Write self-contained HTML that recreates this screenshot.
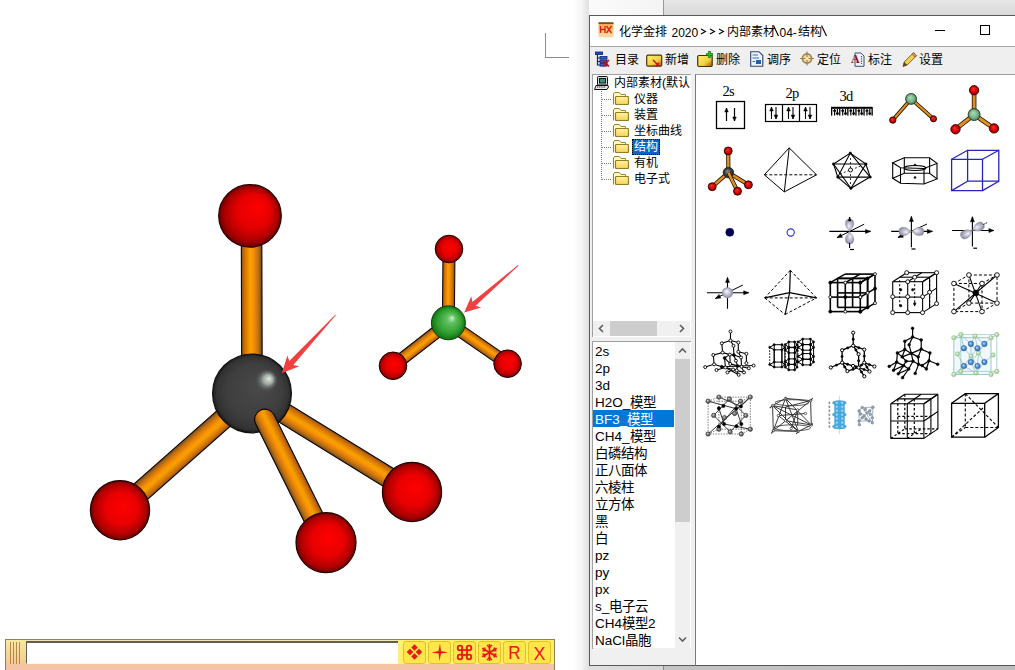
<!DOCTYPE html>
<html lang="zh-CN">
<head>
<meta charset="utf-8">
<style>
*{margin:0;padding:0;box-sizing:border-box}
html,body{width:1015px;height:670px;overflow:hidden;background:#fff;font-family:"Liberation Sans",sans-serif;}
.a{position:absolute}
#desk{left:663px;top:0;width:352px;height:15px;background:linear-gradient(#e6e6e6,#d9d9d9);border-left:1px solid #9a9a9a}
#deskl{left:589px;top:0;width:74px;height:15px;background:linear-gradient(90deg,#fbfbfb,#f4f4f4)}
#shadow{left:572px;top:0px;width:17px;height:670px;background:linear-gradient(90deg,rgba(0,0,0,0),rgba(0,0,0,0.03) 50%,rgba(0,0,0,0.12))}
#win{left:589px;top:15px;width:430px;height:651px;background:#f0f0f0;border:1px solid #5a5a5a;border-right:none}
#title{left:590px;top:16px;width:425px;height:30px;background:#fff}
#tline{left:590px;top:46px;width:425px;height:1px;background:#a8a8a8}
#tb{left:590px;top:47px;width:425px;height:27px;background:#efefef}
#tree{left:592px;top:74px;width:99px;height:263px;background:#fff;border-top:1px solid #a0a0a0;border-left:1px solid #a0a0a0}
#list{left:592px;top:341px;width:99px;height:308px;background:#fff;border-top:1px solid #a0a0a0;border-left:1px solid #a0a0a0}
#grid{left:695px;top:74px;width:320px;height:592px;background:#fff;border-top:1px solid #a0a0a0;border-left:1px solid #7a7a7a;border-bottom:1px solid #555}
#below{left:589px;top:666px;width:426px;height:4px;background:linear-gradient(90deg,#e0e0e0 0,#d4d4d4 74px,#8a8a8a 74px,#8a8a8a 75px,#c4c4c4 75px,#bcbcbc)}
</style>
</head>
<body>
<!--MOL--><svg class="a" style="left:0;top:0" width="580" height="630" viewBox="0 0 580 630">
<defs>
<linearGradient id="bg" x1="0" y1="0" x2="0" y2="1">
<stop offset="0" stop-color="#7a5a20"/><stop offset="0.15" stop-color="#d46c00"/><stop offset="0.4" stop-color="#f0a000"/><stop offset="0.5" stop-color="#ff9a00"/><stop offset="0.62" stop-color="#f08a08"/><stop offset="0.82" stop-color="#c07010"/><stop offset="1" stop-color="#6a4a20"/>
</linearGradient>
<radialGradient id="red" cx="0.5" cy="0.5" r="0.5" fx="0.56" fy="0.42">
<stop offset="0" stop-color="#ff0000"/><stop offset="0.55" stop-color="#e80000"/><stop offset="0.85" stop-color="#b00000"/><stop offset="1" stop-color="#700000"/>
</radialGradient>
<radialGradient id="redt" cx="0.5" cy="0.5" r="0.5" fx="0.64" fy="0.34">
<stop offset="0" stop-color="#ff0000"/><stop offset="0.55" stop-color="#e40000"/><stop offset="0.85" stop-color="#aa0000"/><stop offset="1" stop-color="#680000"/>
</radialGradient>
<radialGradient id="blk" cx="0.5" cy="0.5" r="0.5" fx="0.6" fy="0.4">
<stop offset="0" stop-color="#4a4a4a"/><stop offset="0.7" stop-color="#3e3e3e"/><stop offset="0.92" stop-color="#323232"/><stop offset="1" stop-color="#1c1c1c"/>
</radialGradient>
<radialGradient id="hl" cx="0.5" cy="0.5" r="0.5" fx="0.62" fy="0.42">
<stop offset="0" stop-color="#e0ece4" stop-opacity="1"/><stop offset="0.4" stop-color="#b8c4bc" stop-opacity="0.8"/><stop offset="1" stop-color="#404040" stop-opacity="0"/>
</radialGradient>
<radialGradient id="grn" cx="0.5" cy="0.5" r="0.5" fx="0.62" fy="0.35">
<stop offset="0" stop-color="#c8f0c8"/><stop offset="0.25" stop-color="#60c060"/><stop offset="0.7" stop-color="#30a030"/><stop offset="1" stop-color="#107010"/>
</radialGradient>
</defs>
<g transform="translate(252.00,393.40) rotate(-90.16)"><rect x="0" y="-10.25" width="177.4" height="20.50" fill="url(#bg)" stroke="#100000" stroke-width="1.1"/></g>
<g transform="translate(252.00,393.40) rotate(138.54)"><rect x="0" y="-10.25" width="176.1" height="20.50" fill="url(#bg)" stroke="#100000" stroke-width="1.1"/></g>
<g transform="translate(252.00,393.40) rotate(31.64)"><rect x="0" y="-10.25" width="187.9" height="20.50" fill="url(#bg)" stroke="#100000" stroke-width="1.1"/></g>
<circle cx="250" cy="215.8" r="31.3" fill="url(#redt)" stroke="#200000" stroke-width="1.2"/>
<circle cx="120" cy="510.2" r="29.6" fill="url(#red)" stroke="#200000" stroke-width="1.2"/>
<circle cx="412" cy="492" r="29.6" fill="url(#red)" stroke="#200000" stroke-width="1.2"/>
<circle cx="252" cy="393.4" r="39.4" fill="url(#blk)" stroke="#101010" stroke-width="1.2"/>
<circle cx="266.5" cy="380.5" r="12" fill="url(#hl)"/>
<g transform="translate(264.89,419.38) rotate(63.62)"><path d="M137.5,-10.25 L0,-10.25 A10.25,10.25 0 0 0 0,10.25 L137.5,10.25 Z" fill="url(#bg)" stroke="#100000" stroke-width="1.1"/></g>
<circle cx="326" cy="542.6" r="30" fill="url(#red)" stroke="#200000" stroke-width="1.2"/>
<g transform="translate(448.40,322.80) rotate(-89.53)"><rect x="0" y="-6.00" width="73.8" height="12.00" fill="url(#bg)" stroke="#100000" stroke-width="1"/></g>
<g transform="translate(448.40,322.80) rotate(142.18)"><rect x="0" y="-6.00" width="70.1" height="12.00" fill="url(#bg)" stroke="#100000" stroke-width="1"/></g>
<g transform="translate(448.40,322.80) rotate(34.64)"><rect x="0" y="-6.00" width="72.0" height="12.00" fill="url(#bg)" stroke="#100000" stroke-width="1"/></g>
<circle cx="449" cy="249" r="13.8" fill="url(#red)" stroke="#200000" stroke-width="1"/>
<circle cx="393" cy="365.8" r="13.8" fill="url(#red)" stroke="#200000" stroke-width="1"/>
<circle cx="507.6" cy="363.7" r="13.8" fill="url(#red)" stroke="#200000" stroke-width="1"/>
<circle cx="448.4" cy="322.8" r="17" fill="url(#grn)" stroke="#104010" stroke-width="1"/>
<polygon points="335.2,314.7 289.3,361.1 287.4,355.4 281.8,373.3 299.2,366.2 293.3,364.9 335.8,315.3" fill="#f04040"/>
<polygon points="517.9,265.1 472.4,302.1 471.3,296.3 464.2,312.5 481.2,307.6 475.6,305.8 518.5,265.7" fill="#f04040"/>
</svg><!--/MOL-->
<div class="a" id="deskl"></div>
<div class="a" id="desk"></div>
<div class="a" id="shadow"></div>
<div class="a" id="win"></div>
<div class="a" id="title"></div>
<div class="a" id="tline"></div>
<div class="a" id="tb"></div>
<div class="a" id="tree"></div>
<div class="a" id="list"></div>
<div class="a" id="grid"></div>
<div class="a" id="below"></div>

<!-- title bar -->
<svg class="a" style="left:598px;top:22px" width="16" height="16" viewBox="0 0 16 16">
<defs><linearGradient id="hxg" x1="0" y1="0" x2="0" y2="1"><stop offset="0" stop-color="#f0a850"/><stop offset="0.5" stop-color="#f8c878"/><stop offset="1" stop-color="#f0e0b0"/></linearGradient></defs>
<rect x="0.5" y="0.5" width="15" height="15" rx="1" fill="url(#hxg)"/>
<rect x="0.5" y="0.3" width="15" height="1.6" fill="#6a4a20"/>
<path d="M2.5,4 L2.5,11 M7,4 L7,11 M2.5,7.5 L7,7.5 M8.5,4 L13.5,11 M13.5,4 L8.5,11" stroke="#e02010" stroke-width="1.4" fill="none"/>
</svg>
<div class="a" id="ttl" style="left:0;top:25px;font-size:12px;line-height:14px;color:#000;white-space:nowrap">
<span class="a" style="left:619px">化学金排</span><span class="a" style="left:671.5px;top:1px">2020</span>
<span class="a" style="left:726.5px">内部素材</span><span class="a" style="left:779.5px;top:1px">04-</span><span class="a" style="left:797.5px">结构</span>
</div>
<svg class="a" style="left:770px;top:24px" width="60" height="14"><g stroke="#000" stroke-width="1.1"><line x1="3.5" y1="1.5" x2="8.5" y2="12"/><line x1="51.5" y1="1.5" x2="56.5" y2="12"/></g></svg>
<svg class="a" style="left:700px;top:28px" width="26" height="7"><g fill="none" stroke="#000" stroke-width="1.1"><path d="M1,1 L5.5,3.5 L1,6"/><path d="M10,1 L14.5,3.5 L10,6"/><path d="M19,1 L23.5,3.5 L19,6"/></g></svg>
<div class="a" style="left:935px;top:30px;width:10px;height:1px;background:#000"></div>
<div class="a" style="left:980px;top:25px;width:10px;height:10px;border:1px solid #000"></div>
<!-- toolbar -->
<svg class="a" style="left:595px;top:51px" width="17" height="17" viewBox="0 0 17 17">
<rect x="0.5" y="1" width="7" height="2.6" fill="#2050c0" stroke="#102070" stroke-width="0.8"/>
<path d="M2.5,3.5 L2.5,14.5 M2.5,7 L5,7 M2.5,10.5 L5,10.5 M2.5,14 L5,14" stroke="#102070" stroke-width="1.2" fill="none"/>
<rect x="5" y="5.5" width="7" height="2.6" fill="#3060d0" stroke="#102070" stroke-width="0.8"/>
<rect x="5" y="9" width="7" height="2.6" fill="#3060d0" stroke="#102070" stroke-width="0.8"/>
<rect x="5" y="12.5" width="7" height="2.6" fill="#3060d0" stroke="#102070" stroke-width="0.8"/>
<path d="M8,9 L14,15.5 M14,9 L8,15.5" stroke="#c01010" stroke-width="1.6"/>
</svg>
<svg class="a" style="left:646px;top:54px" width="17" height="14" viewBox="0 0 17 14">
<defs><linearGradient id="yb" x1="0" y1="0" x2="1" y2="1"><stop offset="0" stop-color="#fff070"/><stop offset="0.6" stop-color="#f0d040"/><stop offset="1" stop-color="#a05010"/></linearGradient></defs>
<rect x="0.7" y="1.2" width="15" height="11" rx="1.2" fill="url(#yb)" stroke="#503010" stroke-width="1.2"/>
<path d="M7,6 L13,12 M10,12 L13,9" stroke="#c01010" stroke-width="1.4" fill="none"/>
</svg>
<svg class="a" style="left:697px;top:50px" width="17" height="18" viewBox="0 0 17 18">
<rect x="0.7" y="5.5" width="14.5" height="11" rx="1.2" fill="url(#yb)" stroke="#403010" stroke-width="1.2"/>
<path d="M12.5,1 L12.5,8 M9,4.5 L16,4.5" stroke="#108010" stroke-width="2.6"/>
<path d="M12.5,1.8 L12.5,7.2 M9.8,4.5 L15.2,4.5" stroke="#30c030" stroke-width="1.2"/>
</svg>
<svg class="a" style="left:750px;top:51px" width="14" height="16" viewBox="0 0 14 16">
<path d="M0.7,0.7 L9,0.7 L12.8,4.5 L12.8,15.3 L0.7,15.3 Z" fill="#eef4ff" stroke="#304070" stroke-width="1.1"/>
<path d="M2.5,4 L8,4 M2.5,7 L9,7 M2.5,10.5 L5,10.5" stroke="#3070c0" stroke-width="1.1"/>
<rect x="6" y="9" width="5" height="4" fill="#2060b0"/>
</svg>
<svg class="a" style="left:800px;top:51px" width="15" height="15" viewBox="0 0 15 15">
<circle cx="7" cy="7.5" r="4.6" fill="#f0dca0" stroke="#a08050" stroke-width="1.6"/>
<path d="M7,0.5 L7,14.5 M0,7.5 L14,7.5" stroke="#a08050" stroke-width="1.2"/>
<circle cx="7" cy="7.5" r="1.5" fill="#fff0c0"/>
</svg>
<svg class="a" style="left:851px;top:52px" width="14" height="15" viewBox="0 0 14 15">
<path d="M4,1 L10,1 L13,4 L13,14.3 L4,14.3 Z" fill="#eef2fa" stroke="#405070" stroke-width="1"/>
<path d="M10.5,4 L10.5,12" stroke="#3060a0" stroke-width="1.2" stroke-dasharray="1.3,1"/>
<text x="0" y="11" font-family="Liberation Serif" font-size="12" font-weight="bold" fill="#901020">A</text>
</svg>
<svg class="a" style="left:901px;top:51px" width="17" height="17" viewBox="0 0 17 17">
<path d="M2,15.5 L3.2,11 L12.5,1.7 L15.5,4.7 L6.2,14 Z" fill="#f4d050" stroke="#806020" stroke-width="1"/>
<path d="M12.5,1.7 L15.5,4.7 L14,6.2 L11,3.2 Z" fill="#e89090" stroke="#806020" stroke-width="0.8"/>
<path d="M2,15.5 L3.2,11 L6.2,14 Z" fill="#604020"/>
</svg>

<div class="a" id="tbtext" style="left:0;top:52px;font-size:12px;line-height:16px;color:#000;white-space:nowrap">
<span class="a" style="left:615px">目录</span>
<span class="a" style="left:665px">新增</span>
<span class="a" style="left:716px">删除</span>
<span class="a" style="left:767px">调序</span>
<span class="a" style="left:817px">定位</span>
<span class="a" style="left:868px">标注</span>
<span class="a" style="left:919px">设置</span>
</div>

<svg class="a" style="left:0;top:0" width="1" height="1"><defs>
<linearGradient id="fold" x1="0" y1="0" x2="0" y2="1"><stop offset="0" stop-color="#fff4a0"/><stop offset="0.6" stop-color="#f8e070"/><stop offset="1" stop-color="#f0d060"/></linearGradient>
<symbol id="folder" viewBox="0 0 16 13">
<path d="M0.5,12.5 L0.5,2 L1.5,0.5 L6.5,0.5 L8,2.5 L12.5,2.5 L12.5,4.5" fill="#fff8c0" stroke="#a08830" stroke-width="1"/>
<rect x="2.5" y="4.5" width="13" height="8" rx="1" fill="url(#fold)" stroke="#9a7a20" stroke-width="1.2"/>
</symbol>
</defs></svg>
<svg class="a" style="left:594px;top:76px" width="16" height="14" viewBox="0 0 16 14">
<rect x="3.5" y="0.5" width="10" height="8.5" rx="1" fill="#d8d8d8" stroke="#111" stroke-width="1"/>
<rect x="5.5" y="2.5" width="6" height="4.5" fill="#409080" stroke="#111" stroke-width="1"/>
<path d="M2,9.5 L14,9.5 L14.5,11 L13,13.5 L0.5,13.5 Z" fill="#e8e8e8" stroke="#111" stroke-width="1"/>
<path d="M3,11 L12,11" stroke="#111" stroke-width="1.2" stroke-dasharray="1.2,1"/>
</svg>
<div class="a" style="left:614px;top:75px;width:76px;height:16px;overflow:hidden;font-size:12px;line-height:16px;white-space:nowrap;color:#000">内部素材(默认</div>
<svg class="a" style="left:592px;top:74px" width="30" height="120"><path d="M9.5,17 L9.5,106" stroke="#808080" stroke-width="1" stroke-dasharray="1,1"/><path d="M10,25.5 L20,25.5" stroke="#808080" stroke-width="1" stroke-dasharray="1,1"/><path d="M10,41.5 L20,41.5" stroke="#808080" stroke-width="1" stroke-dasharray="1,1"/><path d="M10,57.5 L20,57.5" stroke="#808080" stroke-width="1" stroke-dasharray="1,1"/><path d="M10,73.5 L20,73.5" stroke="#808080" stroke-width="1" stroke-dasharray="1,1"/><path d="M10,89.5 L20,89.5" stroke="#808080" stroke-width="1" stroke-dasharray="1,1"/><path d="M10,105.5 L20,105.5" stroke="#808080" stroke-width="1" stroke-dasharray="1,1"/></svg>
<svg class="a" style="left:613px;top:92px" width="16" height="13"><use href="#folder"/></svg>
<div class="a" style="left:634px;top:91px;font-size:12px;line-height:16px;white-space:nowrap;color:#000">仪器</div>
<svg class="a" style="left:613px;top:108px" width="16" height="13"><use href="#folder"/></svg>
<div class="a" style="left:634px;top:107px;font-size:12px;line-height:16px;white-space:nowrap;color:#000">装置</div>
<svg class="a" style="left:613px;top:124px" width="16" height="13"><use href="#folder"/></svg>
<div class="a" style="left:634px;top:123px;font-size:12px;line-height:16px;white-space:nowrap;color:#000">坐标曲线</div>
<svg class="a" style="left:613px;top:140px" width="16" height="13"><use href="#folder"/></svg>
<div class="a" style="left:632px;top:139px;width:28px;height:16px;background:#0a64c8;outline:1px dotted #000;outline-offset:-1px"></div>
<div class="a" style="left:634px;top:139px;font-size:12px;line-height:16px;white-space:nowrap;color:#fff">结构</div>
<svg class="a" style="left:613px;top:156px" width="16" height="13"><use href="#folder"/></svg>
<div class="a" style="left:634px;top:155px;font-size:12px;line-height:16px;white-space:nowrap;color:#000">有机</div>
<svg class="a" style="left:613px;top:172px" width="16" height="13"><use href="#folder"/></svg>
<div class="a" style="left:634px;top:171px;font-size:12px;line-height:16px;white-space:nowrap;color:#000">电子式</div>
<div class="a" style="left:593px;top:321px;width:97px;height:15px;background:#f0f0f0"></div>
<div class="a" style="left:610px;top:321px;width:47px;height:15px;background:#cdcdcd"></div>
<svg class="a" style="left:597px;top:324px" width="9" height="9"><path d="M6,1 L2.5,4.5 L6,8" fill="none" stroke="#606060" stroke-width="1.6"/></svg>
<svg class="a" style="left:677px;top:324px" width="9" height="9"><path d="M3,1 L6.5,4.5 L3,8" fill="none" stroke="#606060" stroke-width="1.6"/></svg>
<div class="a" style="left:593px;top:410px;width:81px;height:17px;background:#0078d7"></div>
<div class="a" style="left:595px;top:343px;font-size:13.5px;line-height:17px;white-space:nowrap;color:#000">2s</div>
<div class="a" style="left:595px;top:360px;font-size:13.5px;line-height:17px;white-space:nowrap;color:#000">2p</div>
<div class="a" style="left:595px;top:377px;font-size:13.5px;line-height:17px;white-space:nowrap;color:#000">3d</div>
<div class="a" style="left:595px;top:394px;font-size:13.5px;line-height:17px;white-space:nowrap;color:#000">H2O_模型</div>
<div class="a" style="left:595px;top:411px;font-size:13.5px;line-height:17px;white-space:nowrap;color:#fff">BF3_模型</div>
<div class="a" style="left:595px;top:428px;font-size:13.5px;line-height:17px;white-space:nowrap;color:#000">CH4_模型</div>
<div class="a" style="left:595px;top:445px;font-size:13.5px;line-height:17px;white-space:nowrap;color:#000">白磷结构</div>
<div class="a" style="left:595px;top:462px;font-size:13.5px;line-height:17px;white-space:nowrap;color:#000">正八面体</div>
<div class="a" style="left:595px;top:479px;font-size:13.5px;line-height:17px;white-space:nowrap;color:#000">六棱柱</div>
<div class="a" style="left:595px;top:496px;font-size:13.5px;line-height:17px;white-space:nowrap;color:#000">立方体</div>
<div class="a" style="left:595px;top:513px;font-size:13.5px;line-height:17px;white-space:nowrap;color:#000">黑</div>
<div class="a" style="left:595px;top:530px;font-size:13.5px;line-height:17px;white-space:nowrap;color:#000">白</div>
<div class="a" style="left:595px;top:547px;font-size:13.5px;line-height:17px;white-space:nowrap;color:#000">pz</div>
<div class="a" style="left:595px;top:564px;font-size:13.5px;line-height:17px;white-space:nowrap;color:#000">py</div>
<div class="a" style="left:595px;top:581px;font-size:13.5px;line-height:17px;white-space:nowrap;color:#000">px</div>
<div class="a" style="left:595px;top:598px;font-size:13.5px;line-height:17px;white-space:nowrap;color:#000">s_电子云</div>
<div class="a" style="left:595px;top:615px;font-size:13.5px;line-height:17px;white-space:nowrap;color:#000">CH4模型2</div>
<div class="a" style="left:595px;top:632px;font-size:13.5px;line-height:17px;white-space:nowrap;color:#000">NaCl晶胞</div>
<div class="a" style="left:593px;top:648px;width:98px;height:1px;background:#f0f0f0"></div>
<div class="a" style="left:675px;top:342px;width:15px;height:306px;background:#f0f0f0"></div>
<div class="a" style="left:675px;top:359px;width:15px;height:163px;background:#cdcdcd"></div>
<svg class="a" style="left:678px;top:346px" width="9" height="9"><path d="M1,6.5 L4.5,3 L8,6.5" fill="none" stroke="#606060" stroke-width="1.6"/></svg>
<svg class="a" style="left:678px;top:635px" width="9" height="9"><path d="M1,2.5 L4.5,6 L8,2.5" fill="none" stroke="#606060" stroke-width="1.6"/></svg>

<!-- L mark -->
<div class="a" style="left:545px;top:33px;width:24px;height:25px;border-left:1px solid #8c8c8c;border-bottom:1px solid #8c8c8c"></div>
<!-- bottom toolbar -->
<div class="a" style="left:5px;top:639px;width:550px;height:31px;border:1px solid #8c8060;border-bottom:none;background:linear-gradient(90deg,#f8e0a8,#fbe8b0 70%,#fff070 72%,#ffee60)"></div>
<div class="a" style="left:6px;top:640px;width:20px;height:26px;background:linear-gradient(#f8e8a0,#f2c890)"></div>
<svg class="a" style="left:6px;top:641px" width="20" height="26"><g stroke="#a88048" stroke-width="0.9"><line x1="4.5" y1="1" x2="4.5" y2="25"/><line x1="7.5" y1="1" x2="7.5" y2="25"/><line x1="10.5" y1="1" x2="10.5" y2="25"/><line x1="13.5" y1="1" x2="13.5" y2="25"/></g></svg>
<div class="a" style="left:26px;top:641px;width:372px;height:23px;background:#fff;border-top:2px solid #606050;border-left:1.5px solid #606050;border-bottom:1px solid #fff8e0"></div>
<div class="a" style="left:5px;top:664px;width:550px;height:6px;background:#f4c4a4;border-left:1px solid #8c8060;border-right:1px solid #8c8060"></div>
<div class="a" style="left:403px;top:641px;width:23px;height:23px;background:#ffe64a;border:1px solid #e8c020;border-radius:3px"></div>
<div class="a" style="left:428px;top:641px;width:23px;height:23px;background:#ffe64a;border:1px solid #e8c020;border-radius:3px"></div>
<div class="a" style="left:453px;top:641px;width:23px;height:23px;background:#ffe64a;border:1px solid #e8c020;border-radius:3px"></div>
<div class="a" style="left:478px;top:641px;width:23px;height:23px;background:#ffe64a;border:1px solid #e8c020;border-radius:3px"></div>
<div class="a" style="left:503px;top:641px;width:23px;height:23px;background:#ffe64a;border:1px solid #e8c020;border-radius:3px"></div>
<div class="a" style="left:528px;top:641px;width:23px;height:23px;background:#ffe64a;border:1px solid #e8c020;border-radius:3px"></div>
<svg class="a" style="left:403px;top:641px" width="23" height="23"><g fill="#e81818"><rect x="-2.3" y="-2.3" width="4.6" height="4.6" transform="translate(11.5,6.5) rotate(45)"/><rect x="-2.3" y="-2.3" width="4.6" height="4.6" transform="translate(7,11) rotate(45)"/><rect x="-2.3" y="-2.3" width="4.6" height="4.6" transform="translate(16,11) rotate(45)"/><rect x="-2.3" y="-2.3" width="4.6" height="4.6" transform="translate(11.5,15.5) rotate(45)"/></g></svg>
<svg class="a" style="left:428px;top:641px" width="23" height="23"><path d="M12,2.5 L13,10 L20,11.5 L13,12.5 L11.5,20 L10.5,12.5 L3.5,11.5 L10.5,10 Z" fill="#e81818"/></svg>
<svg class="a" style="left:453px;top:641px" width="23" height="23"><g fill="none" stroke="#e81818" stroke-width="1.8"><rect x="9" y="9" width="5" height="5"/><circle cx="7" cy="7" r="2.3"/><circle cx="16" cy="7" r="2.3"/><circle cx="7" cy="16" r="2.3"/><circle cx="16" cy="16" r="2.3"/></g></svg>
<svg class="a" style="left:478px;top:641px" width="23" height="23"><g stroke="#e81818" stroke-width="1.8" fill="none"><line x1="11.5" y1="3" x2="11.5" y2="20"/><line x1="4.2" y1="7.2" x2="18.8" y2="15.8"/><line x1="4.2" y1="15.8" x2="18.8" y2="7.2"/><path d="M9,4 L11.5,6.5 L14,4 M9,19 L11.5,16.5 L14,19 M4.5,10 L7.5,9.5 L6.5,6.5 M18.5,13 L15.5,13.5 L16.5,16.5 M4.5,13 L7.5,13.5 L6.5,16.5 M18.5,10 L15.5,9.5 L16.5,6.5" stroke-width="1.4"/></g></svg>
<svg class="a" style="left:503px;top:641px" width="23" height="23"><text x="11.5" y="18.5" text-anchor="middle" font-family="Liberation Sans" font-size="18" fill="#e81818" transform="translate(11.5,0) scale(0.95,1) translate(-11.5,0)">R</text></svg>
<svg class="a" style="left:528px;top:641px" width="23" height="23"><text x="11.5" y="18.5" text-anchor="middle" font-family="Liberation Sans" font-size="18" fill="#e81818">X</text></svg>
<!--GRID--><svg class="a" style="left:0;top:0" width="1015" height="670" viewBox="0 0 1015 670">
<defs>
<radialGradient id="sred" fx="0.4" fy="0.35"><stop offset="0" stop-color="#ff3030"/><stop offset="0.7" stop-color="#d00000"/><stop offset="1" stop-color="#800000"/></radialGradient>
<radialGradient id="sgrn" fx="0.4" fy="0.35"><stop offset="0" stop-color="#b0e0b8"/><stop offset="0.7" stop-color="#70b080"/><stop offset="1" stop-color="#407050"/></radialGradient>
<radialGradient id="sdk" fx="0.4" fy="0.35"><stop offset="0" stop-color="#909090"/><stop offset="0.6" stop-color="#404040"/><stop offset="1" stop-color="#202020"/></radialGradient>
<radialGradient id="sgry" fx="0.35" fy="0.35"><stop offset="0" stop-color="#e0e0e0"/><stop offset="0.5" stop-color="#808080"/><stop offset="1" stop-color="#404040"/></radialGradient>
<radialGradient id="sblu" fx="0.35" fy="0.35"><stop offset="0" stop-color="#c0e0ff"/><stop offset="0.6" stop-color="#5090d0"/><stop offset="1" stop-color="#3060a0"/></radialGradient>
<radialGradient id="slgr" fx="0.35" fy="0.35"><stop offset="0" stop-color="#f0fff0"/><stop offset="0.6" stop-color="#b0d8a0"/><stop offset="1" stop-color="#80b080"/></radialGradient>
<radialGradient id="lobe" fx="0.4" fy="0.4"><stop offset="0" stop-color="#f4f4fa"/><stop offset="0.6" stop-color="#b8b8c8"/><stop offset="1" stop-color="#8888a0"/></radialGradient>
<radialGradient id="sorb" fx="0.4" fy="0.35"><stop offset="0" stop-color="#ffffff"/><stop offset="0.5" stop-color="#c8c8d8"/><stop offset="1" stop-color="#8888a0"/></radialGradient>
</defs>
<text x="722.5" y="96.0" font-family="Liberation Serif" font-size="14.5" fill="#000" text-anchor="start" letter-spacing="-0.8">2s</text>
<rect x="716.5" y="101.5" width="28" height="27" fill="none" stroke="#000" stroke-width="1.3"/>
<line x1="726.5" y1="108.0" x2="726.5" y2="121.0" stroke="#000" stroke-width="1.2"/>
<polygon points="724.7,112.0 726.5,108.0 728.3,112.0" fill="#000" stroke="#000" stroke-width="0.5"/>
<line x1="734.5" y1="108.0" x2="734.5" y2="121.0" stroke="#000" stroke-width="1.2"/>
<polygon points="732.7,117.0 734.5,121.0 736.3,117.0" fill="#000" stroke="#000" stroke-width="0.5"/>
<text x="785.5" y="98.0" font-family="Liberation Serif" font-size="14.5" fill="#000" text-anchor="start" letter-spacing="-0.8">2p</text>
<rect x="765.5" y="104.5" width="51" height="17" fill="none" stroke="#000" stroke-width="1.2"/>
<line x1="782.5" y1="104.5" x2="782.5" y2="121.5" stroke="#000" stroke-width="1.2"/>
<line x1="799.5" y1="104.5" x2="799.5" y2="121.5" stroke="#000" stroke-width="1.2"/>
<line x1="771.5" y1="107.0" x2="771.5" y2="119.0" stroke="#000" stroke-width="1.1"/>
<polygon points="769.7,111.0 771.5,107.0 773.3,111.0" fill="#000" stroke="#000" stroke-width="0.5"/>
<line x1="776.0" y1="107.0" x2="776.0" y2="119.0" stroke="#000" stroke-width="1.1"/>
<polygon points="774.2,115.0 776.0,119.0 777.8,115.0" fill="#000" stroke="#000" stroke-width="0.5"/>
<line x1="788.5" y1="107.0" x2="788.5" y2="119.0" stroke="#000" stroke-width="1.1"/>
<polygon points="786.7,111.0 788.5,107.0 790.3,111.0" fill="#000" stroke="#000" stroke-width="0.5"/>
<line x1="793.0" y1="107.0" x2="793.0" y2="119.0" stroke="#000" stroke-width="1.1"/>
<polygon points="791.2,115.0 793.0,119.0 794.8,115.0" fill="#000" stroke="#000" stroke-width="0.5"/>
<line x1="805.5" y1="107.0" x2="805.5" y2="119.0" stroke="#000" stroke-width="1.1"/>
<polygon points="803.7,111.0 805.5,107.0 807.3,111.0" fill="#000" stroke="#000" stroke-width="0.5"/>
<line x1="810.0" y1="107.0" x2="810.0" y2="119.0" stroke="#000" stroke-width="1.1"/>
<polygon points="808.2,115.0 810.0,119.0 811.8,115.0" fill="#000" stroke="#000" stroke-width="0.5"/>
<text x="839.5" y="101.0" font-family="Liberation Serif" font-size="14.5" fill="#000" text-anchor="start" letter-spacing="-0.8">3d</text>
<rect x="831" y="106.8" width="41" height="2" fill="#000"/>
<rect x="831.0" y="107" width="1.3" height="8.6" fill="#000"/>
<rect x="839.1" y="107" width="1.3" height="8.6" fill="#000"/>
<rect x="847.2" y="107" width="1.3" height="8.6" fill="#000"/>
<rect x="855.3" y="107" width="1.3" height="8.6" fill="#000"/>
<rect x="863.4" y="107" width="1.3" height="8.6" fill="#000"/>
<rect x="871.5" y="107" width="1.3" height="8.6" fill="#000"/>
<rect x="834.0" y="109" width="1.2" height="6.5" fill="#000"/>
<rect x="833.2" y="110" width="2.8" height="1.6" fill="#000"/>
<rect x="836.8" y="109" width="1.2" height="6.2" fill="#000"/>
<rect x="836.0" y="112.6" width="2.8" height="1.8" fill="#000"/>
<rect x="842.1" y="109" width="1.2" height="6.5" fill="#000"/>
<rect x="841.3" y="110" width="2.8" height="1.6" fill="#000"/>
<rect x="844.9" y="109" width="1.2" height="6.2" fill="#000"/>
<rect x="844.1" y="112.6" width="2.8" height="1.8" fill="#000"/>
<rect x="850.2" y="109" width="1.2" height="6.5" fill="#000"/>
<rect x="849.4" y="110" width="2.8" height="1.6" fill="#000"/>
<rect x="853.0" y="109" width="1.2" height="6.2" fill="#000"/>
<rect x="852.2" y="112.6" width="2.8" height="1.8" fill="#000"/>
<rect x="858.3" y="109" width="1.2" height="6.5" fill="#000"/>
<rect x="857.5" y="110" width="2.8" height="1.6" fill="#000"/>
<rect x="861.1" y="109" width="1.2" height="6.2" fill="#000"/>
<rect x="860.3" y="112.6" width="2.8" height="1.8" fill="#000"/>
<rect x="866.4" y="109" width="1.2" height="6.5" fill="#000"/>
<rect x="865.6" y="110" width="2.8" height="1.6" fill="#000"/>
<rect x="869.2" y="109" width="1.2" height="6.2" fill="#000"/>
<rect x="868.4" y="112.6" width="2.8" height="1.8" fill="#000"/>
<line x1="911.1" y1="98.9" x2="892.8" y2="120.1" stroke="#201000" stroke-width="3.8000000000000003"/>
<line x1="911.1" y1="98.9" x2="892.8" y2="120.1" stroke="#e09020" stroke-width="2.2"/>
<line x1="911.1" y1="98.9" x2="933.5" y2="118.8" stroke="#201000" stroke-width="3.8000000000000003"/>
<line x1="911.1" y1="98.9" x2="933.5" y2="118.8" stroke="#e09020" stroke-width="2.2"/>
<circle cx="892.8" cy="120.1" r="3.2" fill="url(#sred)" stroke="#200000" stroke-width="0.8"/>
<circle cx="933.5" cy="118.8" r="3.1" fill="url(#sred)" stroke="#200000" stroke-width="0.8"/>
<circle cx="911.1" cy="98.9" r="5.5" fill="url(#sgrn)" stroke="#203020" stroke-width="0.8"/>
<line x1="974.1" y1="114.6" x2="974.1" y2="90.2" stroke="#201000" stroke-width="4.6"/>
<line x1="974.1" y1="114.6" x2="974.1" y2="90.2" stroke="#e09020" stroke-width="3"/>
<line x1="974.1" y1="114.6" x2="955.5" y2="129.3" stroke="#201000" stroke-width="4.6"/>
<line x1="974.1" y1="114.6" x2="955.5" y2="129.3" stroke="#e09020" stroke-width="3"/>
<line x1="974.1" y1="114.6" x2="994.0" y2="128.4" stroke="#201000" stroke-width="4.6"/>
<line x1="974.1" y1="114.6" x2="994.0" y2="128.4" stroke="#e09020" stroke-width="3"/>
<circle cx="974.1" cy="90.2" r="4.7" fill="url(#sred)" stroke="#200000" stroke-width="0.8"/>
<circle cx="955.5" cy="129.3" r="4.7" fill="url(#sred)" stroke="#200000" stroke-width="0.8"/>
<circle cx="994.0" cy="128.4" r="4.7" fill="url(#sred)" stroke="#200000" stroke-width="0.8"/>
<circle cx="974.1" cy="114.6" r="6" fill="url(#sgrn)" stroke="#203020" stroke-width="0.8"/>
<line x1="728.4" y1="172.6" x2="728.2" y2="150.9" stroke="#201000" stroke-width="4.1"/>
<line x1="728.4" y1="172.6" x2="728.2" y2="150.9" stroke="#e09020" stroke-width="2.5"/>
<line x1="728.4" y1="172.6" x2="712.2" y2="186.7" stroke="#201000" stroke-width="4.1"/>
<line x1="728.4" y1="172.6" x2="712.2" y2="186.7" stroke="#e09020" stroke-width="2.5"/>
<line x1="728.4" y1="172.6" x2="748.4" y2="184.8" stroke="#201000" stroke-width="4.1"/>
<line x1="728.4" y1="172.6" x2="748.4" y2="184.8" stroke="#e09020" stroke-width="2.5"/>
<circle cx="728.2" cy="150.9" r="4" fill="url(#sred)" stroke="#200000" stroke-width="0.8"/>
<circle cx="712.2" cy="186.7" r="4" fill="url(#sred)" stroke="#200000" stroke-width="0.8"/>
<circle cx="748.4" cy="184.8" r="4" fill="url(#sred)" stroke="#200000" stroke-width="0.8"/>
<circle cx="728.4" cy="172.6" r="5.3" fill="url(#sdk)" stroke="#203020" stroke-width="0.8"/>
<line x1="728.4" y1="172.6" x2="737.5" y2="191.2" stroke="#201000" stroke-width="4.1"/>
<line x1="728.4" y1="172.6" x2="737.5" y2="191.2" stroke="#e09020" stroke-width="2.5"/>
<circle cx="737.5" cy="191.2" r="4" fill="url(#sred)" stroke="#200000" stroke-width="0.8"/>
<line x1="764.3" y1="174.8" x2="816.5" y2="174.8" stroke="#000" stroke-width="1" stroke-dasharray="3,2"/>
<polygon points="789.2,147.9 764.3,174.8 784.3,191.9 816.5,174.8" fill="none" stroke="#000" stroke-width="1"/>
<line x1="789.2" y1="147.9" x2="784.3" y2="191.9" stroke="#000" stroke-width="1"/>
<polygon points="850.3,153.1 865.9,164.0 870.2,177.1 850.9,188.3 837.8,177.1 833.5,164.0" fill="none" stroke="#000" stroke-width="1.1"/>
<polygon points="850.3,153.1 837.8,177.1 870.2,177.1" fill="none" stroke="#000" stroke-width="1.1"/>
<polygon points="850.9,188.3 833.5,164.0 865.9,164.0" fill="none" stroke="#000" stroke-width="1.1"/>
<line x1="850.5" y1="158.0" x2="850.5" y2="184.0" stroke="#000" stroke-width="0.8" stroke-dasharray="2,2"/>
<line x1="840.0" y1="174.0" x2="861.0" y2="166.0" stroke="#000" stroke-width="0.8" stroke-dasharray="2,2"/>
<circle cx="850.5" cy="170.0" r="2" fill="#fff" stroke="#000" stroke-width="0.9"/>
<circle cx="850.3" cy="153.1" r="1.2" fill="#000" stroke="#000" stroke-width="0.5"/>
<circle cx="833.5" cy="164.0" r="1.2" fill="#000" stroke="#000" stroke-width="0.5"/>
<circle cx="865.9" cy="164.0" r="1.2" fill="#000" stroke="#000" stroke-width="0.5"/>
<circle cx="837.8" cy="177.1" r="1.2" fill="#000" stroke="#000" stroke-width="0.5"/>
<circle cx="870.2" cy="177.1" r="1.2" fill="#000" stroke="#000" stroke-width="0.5"/>
<circle cx="850.9" cy="188.3" r="1.2" fill="#000" stroke="#000" stroke-width="0.5"/>
<polygon points="892.7,162.8 904.3,157.8 929.6,157.8 937.0,163.4 924.0,168.5 900.5,167.7" fill="none" stroke="#000" stroke-width="1.1"/>
<polygon points="892.7,178.3 904.3,173.3 929.6,173.3 937.0,178.9 924.0,184.0 900.5,183.2" fill="none" stroke="#000" stroke-width="1.1"/>
<line x1="892.7" y1="162.8" x2="892.7" y2="178.3" stroke="#000" stroke-width="1.1"/>
<line x1="904.3" y1="157.8" x2="904.3" y2="173.3" stroke="#000" stroke-width="1.1"/>
<line x1="929.6" y1="157.8" x2="929.6" y2="173.3" stroke="#000" stroke-width="1.1"/>
<line x1="937.0" y1="163.4" x2="937.0" y2="178.9" stroke="#000" stroke-width="1.1"/>
<line x1="924.0" y1="168.5" x2="924.0" y2="184.0" stroke="#000" stroke-width="1.1"/>
<line x1="900.5" y1="167.7" x2="900.5" y2="183.2" stroke="#000" stroke-width="1.1"/>
<ellipse cx="915" cy="168" rx="11" ry="2.5" fill="none" stroke="#000" stroke-width="1.1"/>
<circle cx="915.0" cy="165.0" r="1" fill="#000" stroke="#000" stroke-width="0.5"/>
<circle cx="915.0" cy="177.5" r="1" fill="#000" stroke="#000" stroke-width="0.5"/>
<polygon points="951.6,159.3 982.5,159.3 982.5,190.6 951.6,190.6" fill="none" stroke="#2626b8" stroke-width="1.3"/>
<polygon points="967.6,150.3 998.8,150.3 998.8,181.2 967.6,181.2" fill="none" stroke="#2626b8" stroke-width="1.3"/>
<line x1="951.6" y1="159.3" x2="967.6" y2="150.3" stroke="#2626b8" stroke-width="1.3"/>
<line x1="982.5" y1="159.3" x2="998.8" y2="150.3" stroke="#2626b8" stroke-width="1.3"/>
<line x1="982.5" y1="190.6" x2="998.8" y2="181.2" stroke="#2626b8" stroke-width="1.3"/>
<line x1="951.6" y1="190.6" x2="967.6" y2="181.2" stroke="#2626b8" stroke-width="1.3"/>
<circle cx="729.8" cy="232.3" r="4" fill="#000050" stroke="#000050" stroke-width="0.6"/>
<circle cx="790.7" cy="232.5" r="3.6" fill="#fff" stroke="#3030d0" stroke-width="1.1"/>
<line x1="829.3" y1="231.4" x2="870.5" y2="231.4" stroke="#000" stroke-width="1.1"/>
<polygon points="865.5,229.4 870.5,231.4 865.5,233.4" fill="#000" stroke="#000" stroke-width="0.5"/>
<line x1="837.0" y1="237.7" x2="864.2" y2="224.2" stroke="#000" stroke-width="1"/>
<polygon points="840.6,233.7 837.0,237.7 842.4,237.3" fill="#000" stroke="#000" stroke-width="0.5"/>
<path d="M0,0 C2.50,-1.26 3.75,-4.20 7.75,-4.20 C11.88,-4.20 12.50,-2.10 12.50,0 C12.50,2.10 11.88,4.20 7.75,4.20 C3.75,4.20 2.50,1.26 0,0 Z" transform="translate(849.60,231.40) rotate(90)" fill="url(#lobe)" stroke="#9090a8" stroke-width="0.3"/>
<path d="M0,0 C2.50,-1.26 3.75,-4.20 7.75,-4.20 C11.88,-4.20 12.50,-2.10 12.50,0 C12.50,2.10 11.88,4.20 7.75,4.20 C3.75,4.20 2.50,1.26 0,0 Z" transform="translate(849.60,231.40) rotate(270)" fill="url(#lobe)" stroke="#9090a8" stroke-width="0.3"/>
<line x1="849.6" y1="217.0" x2="849.6" y2="221.0" stroke="#000" stroke-width="1.2"/>
<polygon points="848.2,221.0 849.6,217.0 851.0,221.0" fill="#000" stroke="#000" stroke-width="0.4"/>
<line x1="849.6" y1="243.0" x2="849.6" y2="248.0" stroke="#000" stroke-width="1.1"/>
<line x1="850.0" y1="249.5" x2="854.0" y2="249.5" stroke="#000" stroke-width="1.2"/>
<line x1="891.2" y1="231.4" x2="932.4" y2="231.4" stroke="#000" stroke-width="1.1"/>
<polygon points="927.4,229.4 932.4,231.4 927.4,233.4" fill="#000" stroke="#000" stroke-width="0.5"/>
<line x1="911.4" y1="216.4" x2="911.4" y2="247.3" stroke="#000" stroke-width="1.1"/>
<polygon points="909.4,221.4 911.4,216.4 913.4,221.4" fill="#000" stroke="#000" stroke-width="0.5"/>
<line x1="898.0" y1="237.5" x2="927.0" y2="224.0" stroke="#000" stroke-width="1"/>
<polygon points="901.7,233.6 898.0,237.5 903.4,237.2" fill="#000" stroke="#000" stroke-width="0.5"/>
<path d="M0,0 C2.50,-1.26 3.75,-4.20 7.75,-4.20 C11.88,-4.20 12.50,-2.10 12.50,0 C12.50,2.10 11.88,4.20 7.75,4.20 C3.75,4.20 2.50,1.26 0,0 Z" transform="translate(911.40,231.40) rotate(0)" fill="url(#lobe)" stroke="#9090a8" stroke-width="0.3"/>
<path d="M0,0 C2.50,-1.26 3.75,-4.20 7.75,-4.20 C11.88,-4.20 12.50,-2.10 12.50,0 C12.50,2.10 11.88,4.20 7.75,4.20 C3.75,4.20 2.50,1.26 0,0 Z" transform="translate(911.40,231.40) rotate(180)" fill="url(#lobe)" stroke="#9090a8" stroke-width="0.3"/>
<line x1="911.5" y1="249.0" x2="915.5" y2="249.0" stroke="#000" stroke-width="1.2"/>
<line x1="952.1" y1="230.5" x2="993.9" y2="230.5" stroke="#000" stroke-width="1.1"/>
<polygon points="988.9,228.5 993.9,230.5 988.9,232.5" fill="#000" stroke="#000" stroke-width="0.5"/>
<line x1="972.4" y1="216.8" x2="972.4" y2="246.6" stroke="#000" stroke-width="1.1"/>
<polygon points="970.4,221.8 972.4,216.8 974.4,221.8" fill="#000" stroke="#000" stroke-width="0.5"/>
<path d="M0,0 C2.60,-1.26 3.90,-4.20 8.06,-4.20 C12.35,-4.20 13.00,-2.10 13.00,0 C13.00,2.10 12.35,4.20 8.06,4.20 C3.90,4.20 2.60,1.26 0,0 Z" transform="translate(972.40,230.50) rotate(-29)" fill="url(#lobe)" stroke="#9090a8" stroke-width="0.3"/>
<path d="M0,0 C2.60,-1.26 3.90,-4.20 8.06,-4.20 C12.35,-4.20 13.00,-2.10 13.00,0 C13.00,2.10 12.35,4.20 8.06,4.20 C3.90,4.20 2.60,1.26 0,0 Z" transform="translate(972.40,230.50) rotate(151)" fill="url(#lobe)" stroke="#9090a8" stroke-width="0.3"/>
<line x1="983.4" y1="224.5" x2="987.3" y2="222.5" stroke="#000" stroke-width="1" stroke-dasharray="1.5,1"/>
<line x1="973.3" y1="248.2" x2="977.0" y2="248.2" stroke="#000" stroke-width="1.2"/>
<line x1="707.0" y1="292.7" x2="748.7" y2="292.7" stroke="#000" stroke-width="1.1"/>
<polygon points="743.7,290.7 748.7,292.7 743.7,294.7" fill="#000" stroke="#000" stroke-width="0.5"/>
<line x1="727.5" y1="277.4" x2="727.5" y2="308.7" stroke="#000" stroke-width="1.1"/>
<polygon points="725.5,282.4 727.5,277.4 729.5,282.4" fill="#000" stroke="#000" stroke-width="0.5"/>
<line x1="715.4" y1="298.5" x2="742.9" y2="285.0" stroke="#000" stroke-width="1"/>
<polygon points="719.0,294.5 715.4,298.5 720.8,298.1" fill="#000" stroke="#000" stroke-width="0.5"/>
<circle cx="727.5" cy="292.7" r="5.5" fill="url(#sorb)" stroke="none" stroke-width="0"/>
<line x1="790.3" y1="270.3" x2="764.7" y2="297.9" stroke="#000" stroke-width="1" stroke-dasharray="3,2"/>
<line x1="790.3" y1="270.3" x2="816.5" y2="297.9" stroke="#000" stroke-width="1" stroke-dasharray="3,2"/>
<line x1="764.7" y1="297.9" x2="816.5" y2="297.9" stroke="#000" stroke-width="1" stroke-dasharray="3,2"/>
<line x1="764.7" y1="297.9" x2="785.1" y2="314.5" stroke="#000" stroke-width="1" stroke-dasharray="3,2"/>
<line x1="785.1" y1="314.5" x2="816.5" y2="297.9" stroke="#000" stroke-width="1" stroke-dasharray="3,2"/>
<line x1="790.3" y1="270.3" x2="789.6" y2="292.7" stroke="#000" stroke-width="1.2"/>
<line x1="789.6" y1="292.7" x2="764.7" y2="297.9" stroke="#000" stroke-width="1.2"/>
<line x1="789.6" y1="292.7" x2="816.5" y2="297.9" stroke="#000" stroke-width="1.2"/>
<line x1="789.6" y1="292.7" x2="785.1" y2="314.5" stroke="#000" stroke-width="1.2"/>
<line x1="830.3" y1="282.6" x2="830.3" y2="311.6" stroke="#000" stroke-width="1.6"/>
<line x1="830.3" y1="282.6" x2="860.3" y2="282.6" stroke="#000" stroke-width="1.6"/>
<line x1="845.3" y1="282.6" x2="845.3" y2="311.6" stroke="#000" stroke-width="1.6"/>
<line x1="830.3" y1="297.1" x2="860.3" y2="297.1" stroke="#000" stroke-width="1.6"/>
<line x1="860.3" y1="282.6" x2="860.3" y2="311.6" stroke="#000" stroke-width="1.6"/>
<line x1="830.3" y1="311.6" x2="860.3" y2="311.6" stroke="#000" stroke-width="1.6"/>
<line x1="830.3" y1="282.6" x2="845.0" y2="274.1" stroke="#000" stroke-width="1.6"/>
<line x1="860.3" y1="282.6" x2="875.0" y2="274.1" stroke="#000" stroke-width="1.6"/>
<line x1="845.3" y1="282.6" x2="860.0" y2="274.1" stroke="#000" stroke-width="1.6"/>
<line x1="860.3" y1="297.1" x2="875.0" y2="288.6" stroke="#000" stroke-width="1.6"/>
<line x1="860.3" y1="282.6" x2="875.0" y2="274.1" stroke="#000" stroke-width="1.6"/>
<line x1="860.3" y1="311.6" x2="875.0" y2="303.1" stroke="#000" stroke-width="1.6"/>
<line x1="837.6" y1="278.4" x2="867.6" y2="278.4" stroke="#000" stroke-width="1.6"/>
<line x1="867.6" y1="278.4" x2="867.6" y2="307.4" stroke="#000" stroke-width="1.6"/>
<line x1="845.0" y1="274.1" x2="875.0" y2="274.1" stroke="#000" stroke-width="1.6"/>
<line x1="875.0" y1="274.1" x2="875.0" y2="303.1" stroke="#000" stroke-width="1.6"/>
<line x1="837.6" y1="278.4" x2="837.6" y2="307.4" stroke="#000" stroke-width="1.6"/>
<line x1="837.6" y1="278.4" x2="867.6" y2="278.4" stroke="#000" stroke-width="1.6"/>
<line x1="852.6" y1="278.4" x2="852.6" y2="307.4" stroke="#000" stroke-width="1.6"/>
<line x1="837.6" y1="292.9" x2="867.6" y2="292.9" stroke="#000" stroke-width="1.6"/>
<line x1="867.6" y1="278.4" x2="867.6" y2="307.4" stroke="#000" stroke-width="1.6"/>
<line x1="837.6" y1="307.4" x2="867.6" y2="307.4" stroke="#000" stroke-width="1.6"/>
<circle cx="830.3" cy="282.6" r="1.5" fill="#000" stroke="#000" stroke-width="0.8"/>
<circle cx="860.3" cy="282.6" r="1.5" fill="#fff" stroke="#000" stroke-width="0.8"/>
<circle cx="830.3" cy="297.1" r="1.5" fill="#fff" stroke="#000" stroke-width="0.8"/>
<circle cx="860.3" cy="297.1" r="1.5" fill="#000" stroke="#000" stroke-width="0.8"/>
<circle cx="830.3" cy="311.6" r="1.5" fill="#000" stroke="#000" stroke-width="0.8"/>
<circle cx="860.3" cy="311.6" r="1.5" fill="#fff" stroke="#000" stroke-width="0.8"/>
<circle cx="845.3" cy="282.6" r="1.5" fill="#fff" stroke="#000" stroke-width="0.8"/>
<circle cx="867.6" cy="278.4" r="1.5" fill="#000" stroke="#000" stroke-width="0.8"/>
<circle cx="845.3" cy="297.1" r="1.5" fill="#000" stroke="#000" stroke-width="0.8"/>
<circle cx="867.6" cy="292.9" r="1.5" fill="#fff" stroke="#000" stroke-width="0.8"/>
<circle cx="845.3" cy="311.6" r="1.5" fill="#fff" stroke="#000" stroke-width="0.8"/>
<circle cx="867.6" cy="307.4" r="1.5" fill="#000" stroke="#000" stroke-width="0.8"/>
<circle cx="860.3" cy="282.6" r="1.5" fill="#000" stroke="#000" stroke-width="0.8"/>
<circle cx="875.0" cy="274.1" r="1.5" fill="#fff" stroke="#000" stroke-width="0.8"/>
<circle cx="860.3" cy="297.1" r="1.5" fill="#fff" stroke="#000" stroke-width="0.8"/>
<circle cx="875.0" cy="288.6" r="1.5" fill="#000" stroke="#000" stroke-width="0.8"/>
<circle cx="860.3" cy="311.6" r="1.5" fill="#000" stroke="#000" stroke-width="0.8"/>
<circle cx="875.0" cy="303.1" r="1.5" fill="#fff" stroke="#000" stroke-width="0.8"/>
<line x1="892.7" y1="281.7" x2="892.7" y2="312.6" stroke="#000" stroke-width="1.1"/>
<line x1="892.7" y1="281.7" x2="922.6" y2="281.7" stroke="#000" stroke-width="1.1"/>
<line x1="907.7" y1="281.7" x2="907.7" y2="312.6" stroke="#000" stroke-width="1.1"/>
<line x1="892.7" y1="297.1" x2="922.6" y2="297.1" stroke="#000" stroke-width="1.1"/>
<line x1="922.6" y1="281.7" x2="922.6" y2="312.6" stroke="#000" stroke-width="1.1"/>
<line x1="892.7" y1="312.6" x2="922.6" y2="312.6" stroke="#000" stroke-width="1.1"/>
<line x1="892.7" y1="281.7" x2="906.7" y2="272.7" stroke="#000" stroke-width="1.1"/>
<line x1="922.6" y1="281.7" x2="936.6" y2="272.7" stroke="#000" stroke-width="1.1"/>
<line x1="907.7" y1="281.7" x2="921.7" y2="272.7" stroke="#000" stroke-width="1.1"/>
<line x1="922.6" y1="297.1" x2="936.6" y2="288.1" stroke="#000" stroke-width="1.1"/>
<line x1="922.6" y1="281.7" x2="936.6" y2="272.7" stroke="#000" stroke-width="1.1"/>
<line x1="922.6" y1="312.6" x2="936.6" y2="303.6" stroke="#000" stroke-width="1.1"/>
<line x1="899.7" y1="277.2" x2="929.6" y2="277.2" stroke="#000" stroke-width="1.1"/>
<line x1="929.6" y1="277.2" x2="929.6" y2="308.1" stroke="#000" stroke-width="1.1"/>
<line x1="906.7" y1="272.7" x2="936.6" y2="272.7" stroke="#000" stroke-width="1.1"/>
<line x1="936.6" y1="272.7" x2="936.6" y2="303.6" stroke="#000" stroke-width="1.1"/>
<line x1="899.7" y1="280.2" x2="899.7" y2="308.1" stroke="#000" stroke-width="1" stroke-dasharray="2,2"/>
<line x1="914.7" y1="280.2" x2="914.7" y2="308.1" stroke="#000" stroke-width="1" stroke-dasharray="2,2"/>
<line x1="929.7" y1="280.2" x2="929.7" y2="308.1" stroke="#000" stroke-width="1" stroke-dasharray="2,2"/>
<circle cx="892.7" cy="296.7" r="2" fill="#fff" stroke="#000" stroke-width="0.9"/>
<circle cx="907.7" cy="281.7" r="2" fill="#fff" stroke="#000" stroke-width="0.9"/>
<circle cx="922.6" cy="296.7" r="2" fill="#fff" stroke="#000" stroke-width="0.9"/>
<circle cx="907.7" cy="312.6" r="2" fill="#fff" stroke="#000" stroke-width="0.9"/>
<circle cx="892.7" cy="312.6" r="2" fill="#fff" stroke="#000" stroke-width="0.9"/>
<circle cx="922.6" cy="312.6" r="2" fill="#fff" stroke="#000" stroke-width="0.9"/>
<circle cx="907.7" cy="296.7" r="2" fill="#fff" stroke="#000" stroke-width="0.9"/>
<circle cx="936.6" cy="272.7" r="2" fill="#fff" stroke="#000" stroke-width="0.9"/>
<circle cx="936.6" cy="303.6" r="2" fill="#fff" stroke="#000" stroke-width="0.9"/>
<circle cx="906.7" cy="272.7" r="2" fill="#fff" stroke="#000" stroke-width="0.9"/>
<circle cx="929.6" cy="292.2" r="2" fill="#fff" stroke="#000" stroke-width="0.9"/>
<circle cx="914.7" cy="277.2" r="2" fill="#fff" stroke="#000" stroke-width="0.9"/>
<circle cx="900.7" cy="289.7" r="1.2" fill="#000" stroke="#000" stroke-width="0.5"/>
<circle cx="914.7" cy="303.7" r="1.2" fill="#000" stroke="#000" stroke-width="0.5"/>
<circle cx="900.7" cy="305.7" r="1.2" fill="#000" stroke="#000" stroke-width="0.5"/>
<circle cx="912.7" cy="289.7" r="1.2" fill="#000" stroke="#000" stroke-width="0.5"/>
<polygon points="953.9,283.5 982.0,283.5 982.0,311.6 953.9,311.6" fill="none" stroke="#000" stroke-width="1" stroke-dasharray="3,2"/>
<polygon points="968.9,275.0 997.0,275.0 997.0,303.1 968.9,303.1" fill="none" stroke="#000" stroke-width="1" stroke-dasharray="3,2"/>
<line x1="953.9" y1="283.5" x2="968.9" y2="275.0" stroke="#000" stroke-width="1" stroke-dasharray="3,2"/>
<line x1="982.0" y1="283.5" x2="997.0" y2="275.0" stroke="#000" stroke-width="1" stroke-dasharray="3,2"/>
<line x1="982.0" y1="311.6" x2="997.0" y2="303.1" stroke="#000" stroke-width="1" stroke-dasharray="3,2"/>
<line x1="953.9" y1="311.6" x2="968.9" y2="303.1" stroke="#000" stroke-width="1" stroke-dasharray="3,2"/>
<line x1="953.9" y1="283.5" x2="997.0" y2="303.1" stroke="#000" stroke-width="1.1"/>
<line x1="982.0" y1="283.5" x2="968.9" y2="303.1" stroke="#000" stroke-width="1.1"/>
<line x1="953.9" y1="311.6" x2="997.0" y2="275.0" stroke="#000" stroke-width="1.1"/>
<line x1="982.0" y1="311.6" x2="968.9" y2="275.0" stroke="#000" stroke-width="1.1"/>
<circle cx="975.8" cy="292.9" r="3" fill="#000" stroke="#000" stroke-width="0.5"/>
<circle cx="953.9" cy="283.5" r="2.3" fill="#fff" stroke="#000" stroke-width="0.9"/>
<circle cx="982.0" cy="283.5" r="2.3" fill="#fff" stroke="#000" stroke-width="0.9"/>
<circle cx="982.0" cy="311.6" r="2.3" fill="#fff" stroke="#000" stroke-width="0.9"/>
<circle cx="953.9" cy="311.6" r="2.3" fill="#fff" stroke="#000" stroke-width="0.9"/>
<circle cx="968.9" cy="275.0" r="2.3" fill="#fff" stroke="#000" stroke-width="0.9"/>
<circle cx="997.0" cy="275.0" r="2.3" fill="#fff" stroke="#000" stroke-width="0.9"/>
<circle cx="997.0" cy="303.1" r="2.3" fill="#fff" stroke="#000" stroke-width="0.9"/>
<circle cx="968.9" cy="303.1" r="2.3" fill="#fff" stroke="#000" stroke-width="0.9"/>
<line x1="730.5" y1="331.5" x2="730.5" y2="340.5" stroke="#000" stroke-width="1.1"/>
<line x1="730.5" y1="340.5" x2="721.8" y2="343.3" stroke="#000" stroke-width="1.1"/>
<line x1="730.5" y1="340.5" x2="738.3" y2="342.5" stroke="#000" stroke-width="1.1"/>
<line x1="730.5" y1="340.5" x2="733.5" y2="345.8" stroke="#000" stroke-width="1.1"/>
<line x1="721.8" y1="343.3" x2="722.6" y2="352.6" stroke="#000" stroke-width="1.1"/>
<line x1="738.3" y1="342.5" x2="738.3" y2="351.8" stroke="#000" stroke-width="1.1"/>
<line x1="733.5" y1="345.8" x2="733.9" y2="355.0" stroke="#000" stroke-width="1.1"/>
<line x1="722.6" y1="352.6" x2="713.3" y2="355.0" stroke="#000" stroke-width="1.1"/>
<line x1="722.6" y1="352.6" x2="729.8" y2="354.6" stroke="#000" stroke-width="1.1"/>
<line x1="738.3" y1="351.8" x2="746.4" y2="353.8" stroke="#000" stroke-width="1.1"/>
<line x1="738.3" y1="351.8" x2="741.1" y2="357.5" stroke="#000" stroke-width="1.1"/>
<line x1="729.8" y1="354.6" x2="733.9" y2="355.0" stroke="#000" stroke-width="1.1"/>
<line x1="713.3" y1="355.0" x2="714.1" y2="364.3" stroke="#000" stroke-width="1.1"/>
<line x1="714.1" y1="364.3" x2="705.2" y2="367.1" stroke="#000" stroke-width="1.1"/>
<line x1="714.1" y1="364.3" x2="721.8" y2="366.7" stroke="#000" stroke-width="1.1"/>
<line x1="724.6" y1="357.9" x2="725.4" y2="367.5" stroke="#000" stroke-width="1.1"/>
<line x1="724.6" y1="357.9" x2="729.8" y2="354.6" stroke="#000" stroke-width="1.1"/>
<line x1="730.2" y1="363.9" x2="729.8" y2="354.6" stroke="#000" stroke-width="1.1"/>
<line x1="746.4" y1="353.8" x2="746.4" y2="363.1" stroke="#000" stroke-width="1.1"/>
<line x1="735.9" y1="360.7" x2="733.9" y2="355.0" stroke="#000" stroke-width="1.1"/>
<line x1="721.8" y1="366.7" x2="725.4" y2="367.5" stroke="#000" stroke-width="1.1"/>
<line x1="725.4" y1="367.5" x2="716.5" y2="370.0" stroke="#000" stroke-width="1.1"/>
<line x1="725.4" y1="367.5" x2="733.1" y2="369.5" stroke="#000" stroke-width="1.1"/>
<line x1="733.1" y1="369.5" x2="727.4" y2="372.4" stroke="#000" stroke-width="1.1"/>
<line x1="733.1" y1="369.5" x2="736.7" y2="370.4" stroke="#000" stroke-width="1.1"/>
<line x1="737.5" y1="365.9" x2="736.7" y2="370.4" stroke="#000" stroke-width="1.1"/>
<line x1="736.7" y1="370.4" x2="738.7" y2="374.8" stroke="#000" stroke-width="1.1"/>
<line x1="737.5" y1="365.9" x2="741.5" y2="366.7" stroke="#000" stroke-width="1.1"/>
<line x1="741.5" y1="366.7" x2="748.8" y2="368.3" stroke="#000" stroke-width="1.1"/>
<line x1="741.5" y1="366.7" x2="744.0" y2="372.4" stroke="#000" stroke-width="1.1"/>
<line x1="721.8" y1="366.7" x2="753.6" y2="365.5" stroke="#000" stroke-width="1.1"/>
<line x1="730.2" y1="363.9" x2="737.5" y2="365.9" stroke="#000" stroke-width="1.1"/>
<line x1="741.1" y1="357.5" x2="741.5" y2="366.7" stroke="#000" stroke-width="1.1"/>
<line x1="724.6" y1="357.9" x2="730.2" y2="363.9" stroke="#000" stroke-width="1.1"/>
<line x1="735.9" y1="360.7" x2="737.5" y2="365.9" stroke="#000" stroke-width="1.1"/>
<line x1="733.9" y1="355.0" x2="741.1" y2="357.5" stroke="#000" stroke-width="1.1"/>
<line x1="733.1" y1="369.5" x2="744.0" y2="372.4" stroke="#000" stroke-width="1.1"/>
<line x1="725.4" y1="367.5" x2="738.7" y2="374.8" stroke="#000" stroke-width="1.1"/>
<circle cx="730.5" cy="331.5" r="1.5" fill="#fff" stroke="#000" stroke-width="0.9"/>
<circle cx="730.5" cy="340.5" r="1.5" fill="#fff" stroke="#000" stroke-width="0.9"/>
<circle cx="721.8" cy="343.3" r="1.5" fill="#fff" stroke="#000" stroke-width="0.9"/>
<circle cx="738.3" cy="342.5" r="1.5" fill="#fff" stroke="#000" stroke-width="0.9"/>
<circle cx="733.5" cy="345.8" r="1.5" fill="#fff" stroke="#000" stroke-width="0.9"/>
<circle cx="722.6" cy="352.6" r="1.5" fill="#fff" stroke="#000" stroke-width="0.9"/>
<circle cx="738.3" cy="351.8" r="1.5" fill="#fff" stroke="#000" stroke-width="0.9"/>
<circle cx="713.3" cy="355.0" r="1.5" fill="#fff" stroke="#000" stroke-width="0.9"/>
<circle cx="729.8" cy="354.6" r="1.5" fill="#fff" stroke="#000" stroke-width="0.9"/>
<circle cx="733.9" cy="355.0" r="1.5" fill="#000" stroke="#000" stroke-width="0.5"/>
<circle cx="746.4" cy="353.8" r="1.5" fill="#fff" stroke="#000" stroke-width="0.9"/>
<circle cx="724.6" cy="357.9" r="1.5" fill="#000" stroke="#000" stroke-width="0.5"/>
<circle cx="741.1" cy="357.5" r="1.5" fill="#fff" stroke="#000" stroke-width="0.9"/>
<circle cx="735.9" cy="360.7" r="1.5" fill="#fff" stroke="#000" stroke-width="0.9"/>
<circle cx="714.1" cy="364.3" r="1.5" fill="#fff" stroke="#000" stroke-width="0.9"/>
<circle cx="730.2" cy="363.9" r="1.5" fill="#fff" stroke="#000" stroke-width="0.9"/>
<circle cx="746.4" cy="363.1" r="1.5" fill="#fff" stroke="#000" stroke-width="0.9"/>
<circle cx="705.2" cy="367.1" r="1.5" fill="#fff" stroke="#000" stroke-width="0.9"/>
<circle cx="721.8" cy="366.7" r="1.5" fill="#000" stroke="#000" stroke-width="0.5"/>
<circle cx="725.4" cy="367.5" r="1.5" fill="#fff" stroke="#000" stroke-width="0.9"/>
<circle cx="737.5" cy="365.9" r="1.5" fill="#000" stroke="#000" stroke-width="0.5"/>
<circle cx="753.6" cy="365.5" r="1.5" fill="#fff" stroke="#000" stroke-width="0.9"/>
<circle cx="716.5" cy="370.0" r="1.5" fill="#fff" stroke="#000" stroke-width="0.9"/>
<circle cx="733.1" cy="369.5" r="1.5" fill="#fff" stroke="#000" stroke-width="0.9"/>
<circle cx="736.7" cy="370.4" r="1.5" fill="#fff" stroke="#000" stroke-width="0.9"/>
<circle cx="748.8" cy="368.3" r="1.5" fill="#fff" stroke="#000" stroke-width="0.9"/>
<circle cx="727.4" cy="372.4" r="1.5" fill="#fff" stroke="#000" stroke-width="0.9"/>
<circle cx="744.0" cy="372.4" r="1.5" fill="#fff" stroke="#000" stroke-width="0.9"/>
<circle cx="738.7" cy="374.8" r="1.5" fill="#fff" stroke="#000" stroke-width="0.9"/>
<circle cx="741.5" cy="366.7" r="1.5" fill="#fff" stroke="#000" stroke-width="0.9"/>
<polygon points="769.7,347.3 774.2,344.7 781.9,344.7 784.9,347.3 781.9,349.8 774.2,349.8" fill="none" stroke="#000" stroke-width="1.0"/>
<polygon points="769.7,364.6 774.2,362.1 781.9,362.1 784.9,364.6 781.9,367.1 774.2,367.1" fill="none" stroke="#000" stroke-width="1.0"/>
<line x1="774.2" y1="344.7" x2="774.2" y2="362.1" stroke="#000" stroke-width="1.0"/>
<line x1="781.9" y1="344.7" x2="781.9" y2="362.1" stroke="#000" stroke-width="1.0"/>
<line x1="781.9" y1="349.8" x2="781.9" y2="367.1" stroke="#000" stroke-width="1.0"/>
<line x1="774.2" y1="349.8" x2="774.2" y2="367.1" stroke="#000" stroke-width="1.0"/>
<line x1="769.7" y1="347.3" x2="769.7" y2="364.6" stroke="#000" stroke-width="1.0" stroke-dasharray="1.5,1.5"/>
<line x1="784.9" y1="347.3" x2="784.9" y2="364.6" stroke="#000" stroke-width="1.0"/>
<circle cx="769.7" cy="347.3" r="1.1" fill="#000" stroke="#000" stroke-width="0.4"/>
<circle cx="774.2" cy="344.7" r="1.1" fill="#000" stroke="#000" stroke-width="0.4"/>
<circle cx="781.9" cy="344.7" r="1.1" fill="#000" stroke="#000" stroke-width="0.4"/>
<circle cx="784.9" cy="347.3" r="1.1" fill="#000" stroke="#000" stroke-width="0.4"/>
<circle cx="781.9" cy="349.8" r="1.1" fill="#000" stroke="#000" stroke-width="0.4"/>
<circle cx="774.2" cy="349.8" r="1.1" fill="#000" stroke="#000" stroke-width="0.4"/>
<circle cx="769.7" cy="364.6" r="1.1" fill="#000" stroke="#000" stroke-width="0.4"/>
<circle cx="774.2" cy="362.1" r="1.1" fill="#000" stroke="#000" stroke-width="0.4"/>
<circle cx="781.9" cy="362.1" r="1.1" fill="#000" stroke="#000" stroke-width="0.4"/>
<circle cx="784.9" cy="364.6" r="1.1" fill="#000" stroke="#000" stroke-width="0.4"/>
<circle cx="781.9" cy="367.1" r="1.1" fill="#000" stroke="#000" stroke-width="0.4"/>
<circle cx="774.2" cy="367.1" r="1.1" fill="#000" stroke="#000" stroke-width="0.4"/>
<polygon points="785.2,344.6 788.8,341.9 794.7,341.9 797.1,344.6 794.7,347.3 788.8,347.3" fill="none" stroke="#000" stroke-width="1.0"/>
<polygon points="785.2,350.2 788.8,347.6 794.7,347.6 797.1,350.2 794.7,352.9 788.8,352.9" fill="none" stroke="#000" stroke-width="1.0"/>
<polygon points="785.2,361.6 788.8,358.9 794.7,358.9 797.1,361.6 794.7,364.3 788.8,364.3" fill="none" stroke="#000" stroke-width="1.0"/>
<polygon points="785.2,367.2 788.8,364.5 794.7,364.5 797.1,367.2 794.7,369.9 788.8,369.9" fill="none" stroke="#000" stroke-width="1.0"/>
<line x1="788.8" y1="341.9" x2="788.8" y2="347.6" stroke="#000" stroke-width="1.0"/>
<line x1="794.7" y1="341.9" x2="794.7" y2="347.6" stroke="#000" stroke-width="1.0"/>
<line x1="794.7" y1="347.3" x2="794.7" y2="352.9" stroke="#000" stroke-width="1.0"/>
<line x1="788.8" y1="347.3" x2="788.8" y2="352.9" stroke="#000" stroke-width="1.0"/>
<line x1="785.2" y1="344.6" x2="785.2" y2="350.2" stroke="#000" stroke-width="1.0" stroke-dasharray="1.5,1.5"/>
<line x1="797.1" y1="344.6" x2="797.1" y2="350.2" stroke="#000" stroke-width="1.0"/>
<line x1="788.8" y1="347.6" x2="788.8" y2="358.9" stroke="#000" stroke-width="1.0"/>
<line x1="794.7" y1="347.6" x2="794.7" y2="358.9" stroke="#000" stroke-width="1.0"/>
<line x1="794.7" y1="352.9" x2="794.7" y2="364.3" stroke="#000" stroke-width="1.0"/>
<line x1="788.8" y1="352.9" x2="788.8" y2="364.3" stroke="#000" stroke-width="1.0"/>
<line x1="785.2" y1="350.2" x2="785.2" y2="361.6" stroke="#000" stroke-width="1.0" stroke-dasharray="1.5,1.5"/>
<line x1="797.1" y1="350.2" x2="797.1" y2="361.6" stroke="#000" stroke-width="1.0"/>
<line x1="788.8" y1="358.9" x2="788.8" y2="364.5" stroke="#000" stroke-width="1.0"/>
<line x1="794.7" y1="358.9" x2="794.7" y2="364.5" stroke="#000" stroke-width="1.0"/>
<line x1="794.7" y1="364.3" x2="794.7" y2="369.9" stroke="#000" stroke-width="1.0"/>
<line x1="788.8" y1="364.3" x2="788.8" y2="369.9" stroke="#000" stroke-width="1.0"/>
<line x1="785.2" y1="361.6" x2="785.2" y2="367.2" stroke="#000" stroke-width="1.0" stroke-dasharray="1.5,1.5"/>
<line x1="797.1" y1="361.6" x2="797.1" y2="367.2" stroke="#000" stroke-width="1.0"/>
<circle cx="785.2" cy="344.6" r="1.1" fill="#000" stroke="#000" stroke-width="0.4"/>
<circle cx="788.8" cy="341.9" r="1.1" fill="#000" stroke="#000" stroke-width="0.4"/>
<circle cx="794.7" cy="341.9" r="1.1" fill="#000" stroke="#000" stroke-width="0.4"/>
<circle cx="797.1" cy="344.6" r="1.1" fill="#000" stroke="#000" stroke-width="0.4"/>
<circle cx="794.7" cy="347.3" r="1.1" fill="#000" stroke="#000" stroke-width="0.4"/>
<circle cx="788.8" cy="347.3" r="1.1" fill="#000" stroke="#000" stroke-width="0.4"/>
<circle cx="785.2" cy="350.2" r="1.1" fill="#000" stroke="#000" stroke-width="0.4"/>
<circle cx="788.8" cy="347.6" r="1.1" fill="#000" stroke="#000" stroke-width="0.4"/>
<circle cx="794.7" cy="347.6" r="1.1" fill="#000" stroke="#000" stroke-width="0.4"/>
<circle cx="797.1" cy="350.2" r="1.1" fill="#000" stroke="#000" stroke-width="0.4"/>
<circle cx="794.7" cy="352.9" r="1.1" fill="#000" stroke="#000" stroke-width="0.4"/>
<circle cx="788.8" cy="352.9" r="1.1" fill="#000" stroke="#000" stroke-width="0.4"/>
<circle cx="785.2" cy="361.6" r="1.1" fill="#000" stroke="#000" stroke-width="0.4"/>
<circle cx="788.8" cy="358.9" r="1.1" fill="#000" stroke="#000" stroke-width="0.4"/>
<circle cx="794.7" cy="358.9" r="1.1" fill="#000" stroke="#000" stroke-width="0.4"/>
<circle cx="797.1" cy="361.6" r="1.1" fill="#000" stroke="#000" stroke-width="0.4"/>
<circle cx="794.7" cy="364.3" r="1.1" fill="#000" stroke="#000" stroke-width="0.4"/>
<circle cx="788.8" cy="364.3" r="1.1" fill="#000" stroke="#000" stroke-width="0.4"/>
<circle cx="785.2" cy="367.2" r="1.1" fill="#000" stroke="#000" stroke-width="0.4"/>
<circle cx="788.8" cy="364.5" r="1.1" fill="#000" stroke="#000" stroke-width="0.4"/>
<circle cx="794.7" cy="364.5" r="1.1" fill="#000" stroke="#000" stroke-width="0.4"/>
<circle cx="797.1" cy="367.2" r="1.1" fill="#000" stroke="#000" stroke-width="0.4"/>
<circle cx="794.7" cy="369.9" r="1.1" fill="#000" stroke="#000" stroke-width="0.4"/>
<circle cx="788.8" cy="369.9" r="1.1" fill="#000" stroke="#000" stroke-width="0.4"/>
<polygon points="798.0,341.8 802.7,339.0 810.4,339.0 813.6,341.8 810.4,344.6 802.7,344.6" fill="none" stroke="#000" stroke-width="1.0"/>
<polygon points="798.0,347.4 802.7,344.6 810.4,344.6 813.6,347.4 810.4,350.2 802.7,350.2" fill="none" stroke="#000" stroke-width="1.0"/>
<polygon points="798.0,356.4 802.7,353.6 810.4,353.6 813.6,356.4 810.4,359.2 802.7,359.2" fill="none" stroke="#000" stroke-width="1.0"/>
<polygon points="798.0,362.1 802.7,359.3 810.4,359.3 813.6,362.1 810.4,364.9 802.7,364.9" fill="none" stroke="#000" stroke-width="1.0"/>
<line x1="802.7" y1="339.0" x2="802.7" y2="344.6" stroke="#000" stroke-width="1.0"/>
<line x1="810.4" y1="339.0" x2="810.4" y2="344.6" stroke="#000" stroke-width="1.0"/>
<line x1="810.4" y1="344.6" x2="810.4" y2="350.2" stroke="#000" stroke-width="1.0"/>
<line x1="802.7" y1="344.6" x2="802.7" y2="350.2" stroke="#000" stroke-width="1.0"/>
<line x1="798.0" y1="341.8" x2="798.0" y2="347.4" stroke="#000" stroke-width="1.0" stroke-dasharray="1.5,1.5"/>
<line x1="813.6" y1="341.8" x2="813.6" y2="347.4" stroke="#000" stroke-width="1.0"/>
<line x1="802.7" y1="344.6" x2="802.7" y2="353.6" stroke="#000" stroke-width="1.0"/>
<line x1="810.4" y1="344.6" x2="810.4" y2="353.6" stroke="#000" stroke-width="1.0"/>
<line x1="810.4" y1="350.2" x2="810.4" y2="359.2" stroke="#000" stroke-width="1.0"/>
<line x1="802.7" y1="350.2" x2="802.7" y2="359.2" stroke="#000" stroke-width="1.0"/>
<line x1="798.0" y1="347.4" x2="798.0" y2="356.4" stroke="#000" stroke-width="1.0" stroke-dasharray="1.5,1.5"/>
<line x1="813.6" y1="347.4" x2="813.6" y2="356.4" stroke="#000" stroke-width="1.0"/>
<line x1="802.7" y1="353.6" x2="802.7" y2="359.3" stroke="#000" stroke-width="1.0"/>
<line x1="810.4" y1="353.6" x2="810.4" y2="359.3" stroke="#000" stroke-width="1.0"/>
<line x1="810.4" y1="359.2" x2="810.4" y2="364.9" stroke="#000" stroke-width="1.0"/>
<line x1="802.7" y1="359.2" x2="802.7" y2="364.9" stroke="#000" stroke-width="1.0"/>
<line x1="798.0" y1="356.4" x2="798.0" y2="362.1" stroke="#000" stroke-width="1.0" stroke-dasharray="1.5,1.5"/>
<line x1="813.6" y1="356.4" x2="813.6" y2="362.1" stroke="#000" stroke-width="1.0"/>
<circle cx="798.0" cy="341.8" r="1.1" fill="#000" stroke="#000" stroke-width="0.4"/>
<circle cx="802.7" cy="339.0" r="1.1" fill="#000" stroke="#000" stroke-width="0.4"/>
<circle cx="810.4" cy="339.0" r="1.1" fill="#000" stroke="#000" stroke-width="0.4"/>
<circle cx="813.6" cy="341.8" r="1.1" fill="#000" stroke="#000" stroke-width="0.4"/>
<circle cx="810.4" cy="344.6" r="1.1" fill="#000" stroke="#000" stroke-width="0.4"/>
<circle cx="802.7" cy="344.6" r="1.1" fill="#000" stroke="#000" stroke-width="0.4"/>
<circle cx="798.0" cy="347.4" r="1.1" fill="#000" stroke="#000" stroke-width="0.4"/>
<circle cx="802.7" cy="344.6" r="1.1" fill="#000" stroke="#000" stroke-width="0.4"/>
<circle cx="810.4" cy="344.6" r="1.1" fill="#000" stroke="#000" stroke-width="0.4"/>
<circle cx="813.6" cy="347.4" r="1.1" fill="#000" stroke="#000" stroke-width="0.4"/>
<circle cx="810.4" cy="350.2" r="1.1" fill="#000" stroke="#000" stroke-width="0.4"/>
<circle cx="802.7" cy="350.2" r="1.1" fill="#000" stroke="#000" stroke-width="0.4"/>
<circle cx="798.0" cy="356.4" r="1.1" fill="#000" stroke="#000" stroke-width="0.4"/>
<circle cx="802.7" cy="353.6" r="1.1" fill="#000" stroke="#000" stroke-width="0.4"/>
<circle cx="810.4" cy="353.6" r="1.1" fill="#000" stroke="#000" stroke-width="0.4"/>
<circle cx="813.6" cy="356.4" r="1.1" fill="#000" stroke="#000" stroke-width="0.4"/>
<circle cx="810.4" cy="359.2" r="1.1" fill="#000" stroke="#000" stroke-width="0.4"/>
<circle cx="802.7" cy="359.2" r="1.1" fill="#000" stroke="#000" stroke-width="0.4"/>
<circle cx="798.0" cy="362.1" r="1.1" fill="#000" stroke="#000" stroke-width="0.4"/>
<circle cx="802.7" cy="359.3" r="1.1" fill="#000" stroke="#000" stroke-width="0.4"/>
<circle cx="810.4" cy="359.3" r="1.1" fill="#000" stroke="#000" stroke-width="0.4"/>
<circle cx="813.6" cy="362.1" r="1.1" fill="#000" stroke="#000" stroke-width="0.4"/>
<circle cx="810.4" cy="364.9" r="1.1" fill="#000" stroke="#000" stroke-width="0.4"/>
<circle cx="802.7" cy="364.9" r="1.1" fill="#000" stroke="#000" stroke-width="0.4"/>
<line x1="853.2" y1="332.7" x2="853.2" y2="345.7" stroke="#000" stroke-width="1.3"/>
<circle cx="853.2" cy="339.2" r="1.2" fill="#000" stroke="#000" stroke-width="0.4"/>
<line x1="853.2" y1="345.7" x2="842.1" y2="350.2" stroke="#000" stroke-width="1.3"/>
<circle cx="847.7" cy="347.9" r="1.2" fill="#000" stroke="#000" stroke-width="0.4"/>
<line x1="853.2" y1="345.7" x2="864.3" y2="349.6" stroke="#000" stroke-width="1.3"/>
<circle cx="858.7" cy="347.7" r="1.2" fill="#000" stroke="#000" stroke-width="0.4"/>
<line x1="853.2" y1="345.7" x2="858.6" y2="354.2" stroke="#000" stroke-width="1.3"/>
<circle cx="855.9" cy="350.0" r="1.2" fill="#000" stroke="#000" stroke-width="0.4"/>
<line x1="842.1" y1="350.2" x2="842.1" y2="362.6" stroke="#000" stroke-width="1.3"/>
<circle cx="842.1" cy="356.4" r="1.2" fill="#000" stroke="#000" stroke-width="0.4"/>
<line x1="864.3" y1="349.6" x2="864.3" y2="362.6" stroke="#000" stroke-width="1.3"/>
<circle cx="864.3" cy="356.1" r="1.2" fill="#000" stroke="#000" stroke-width="0.4"/>
<line x1="858.6" y1="354.2" x2="858.6" y2="367.5" stroke="#000" stroke-width="1.3"/>
<circle cx="858.6" cy="360.8" r="1.2" fill="#000" stroke="#000" stroke-width="0.4"/>
<line x1="842.1" y1="362.6" x2="830.8" y2="367.5" stroke="#000" stroke-width="1.3"/>
<circle cx="836.5" cy="365.1" r="1.2" fill="#000" stroke="#000" stroke-width="0.4"/>
<line x1="842.1" y1="362.6" x2="847.4" y2="371.1" stroke="#000" stroke-width="1.3"/>
<circle cx="844.7" cy="366.9" r="1.2" fill="#000" stroke="#000" stroke-width="0.4"/>
<line x1="842.1" y1="362.6" x2="853.0" y2="365.9" stroke="#000" stroke-width="1.3"/>
<circle cx="847.6" cy="364.3" r="1.2" fill="#000" stroke="#000" stroke-width="0.4"/>
<line x1="853.0" y1="365.9" x2="858.6" y2="367.5" stroke="#000" stroke-width="1.3"/>
<circle cx="855.8" cy="366.7" r="1.2" fill="#000" stroke="#000" stroke-width="0.4"/>
<line x1="864.3" y1="362.6" x2="858.6" y2="367.5" stroke="#000" stroke-width="1.3"/>
<circle cx="861.5" cy="365.1" r="1.2" fill="#000" stroke="#000" stroke-width="0.4"/>
<line x1="864.3" y1="362.6" x2="874.4" y2="366.5" stroke="#000" stroke-width="1.3"/>
<circle cx="869.3" cy="364.6" r="1.2" fill="#000" stroke="#000" stroke-width="0.4"/>
<line x1="858.6" y1="367.5" x2="869.5" y2="371.5" stroke="#000" stroke-width="1.3"/>
<circle cx="864.1" cy="369.5" r="1.2" fill="#000" stroke="#000" stroke-width="0.4"/>
<line x1="858.6" y1="367.5" x2="864.3" y2="376.3" stroke="#000" stroke-width="1.3"/>
<circle cx="861.5" cy="371.9" r="1.2" fill="#000" stroke="#000" stroke-width="0.4"/>
<line x1="864.3" y1="362.6" x2="869.5" y2="371.5" stroke="#000" stroke-width="1.3"/>
<circle cx="866.9" cy="367.1" r="1.2" fill="#000" stroke="#000" stroke-width="0.4"/>
<line x1="847.4" y1="371.1" x2="858.6" y2="367.5" stroke="#000" stroke-width="1.3"/>
<circle cx="853.0" cy="369.3" r="1.2" fill="#000" stroke="#000" stroke-width="0.4"/>
<circle cx="853.2" cy="332.7" r="1.6" fill="#fff" stroke="#000" stroke-width="1.0"/>
<circle cx="853.2" cy="345.7" r="1.6" fill="#fff" stroke="#000" stroke-width="1.0"/>
<circle cx="842.1" cy="350.2" r="1.6" fill="#fff" stroke="#000" stroke-width="1.0"/>
<circle cx="864.3" cy="349.6" r="1.6" fill="#fff" stroke="#000" stroke-width="1.0"/>
<circle cx="858.6" cy="354.2" r="1.6" fill="#fff" stroke="#000" stroke-width="1.0"/>
<circle cx="842.1" cy="362.6" r="1.6" fill="#fff" stroke="#000" stroke-width="1.0"/>
<circle cx="864.3" cy="362.6" r="1.6" fill="#fff" stroke="#000" stroke-width="1.0"/>
<circle cx="858.6" cy="367.5" r="1.6" fill="#fff" stroke="#000" stroke-width="1.0"/>
<circle cx="830.8" cy="367.5" r="1.6" fill="#fff" stroke="#000" stroke-width="1.0"/>
<circle cx="847.4" cy="371.1" r="1.6" fill="#fff" stroke="#000" stroke-width="1.0"/>
<circle cx="853.0" cy="365.9" r="1.6" fill="#fff" stroke="#000" stroke-width="1.0"/>
<circle cx="874.4" cy="366.5" r="1.6" fill="#fff" stroke="#000" stroke-width="1.0"/>
<circle cx="869.5" cy="371.5" r="1.6" fill="#fff" stroke="#000" stroke-width="1.0"/>
<circle cx="864.3" cy="376.3" r="1.6" fill="#fff" stroke="#000" stroke-width="1.0"/>
<line x1="912.6" y1="328.3" x2="912.6" y2="337.0" stroke="#000" stroke-width="1.2"/>
<line x1="912.6" y1="337.0" x2="904.8" y2="341.3" stroke="#000" stroke-width="1.2"/>
<line x1="912.6" y1="337.0" x2="921.2" y2="340.0" stroke="#000" stroke-width="1.2"/>
<line x1="904.8" y1="341.3" x2="904.8" y2="349.5" stroke="#000" stroke-width="1.2"/>
<line x1="921.2" y1="340.0" x2="921.2" y2="349.1" stroke="#000" stroke-width="1.2"/>
<line x1="912.6" y1="337.0" x2="909.1" y2="344.8" stroke="#000" stroke-width="1.2"/>
<line x1="909.1" y1="344.8" x2="911.3" y2="353.4" stroke="#000" stroke-width="1.2"/>
<line x1="904.8" y1="349.5" x2="897.4" y2="353.0" stroke="#000" stroke-width="1.2"/>
<line x1="904.8" y1="349.5" x2="911.3" y2="353.4" stroke="#000" stroke-width="1.2"/>
<line x1="921.2" y1="349.1" x2="929.9" y2="353.0" stroke="#000" stroke-width="1.2"/>
<line x1="921.2" y1="349.1" x2="918.2" y2="356.9" stroke="#000" stroke-width="1.2"/>
<line x1="897.4" y1="353.0" x2="896.6" y2="362.1" stroke="#000" stroke-width="1.2"/>
<line x1="929.9" y1="353.0" x2="929.0" y2="360.8" stroke="#000" stroke-width="1.2"/>
<line x1="929.0" y1="360.8" x2="937.7" y2="364.3" stroke="#000" stroke-width="1.2"/>
<line x1="896.6" y1="362.1" x2="889.2" y2="366.4" stroke="#000" stroke-width="1.2"/>
<line x1="902.2" y1="356.9" x2="904.8" y2="349.5" stroke="#000" stroke-width="1.2"/>
<line x1="902.2" y1="356.9" x2="906.1" y2="361.2" stroke="#000" stroke-width="1.2"/>
<line x1="906.1" y1="361.2" x2="903.5" y2="365.6" stroke="#000" stroke-width="1.2"/>
<line x1="911.3" y1="353.4" x2="902.2" y2="356.9" stroke="#000" stroke-width="1.2"/>
<line x1="918.2" y1="356.9" x2="918.6" y2="364.3" stroke="#000" stroke-width="1.2"/>
<line x1="918.2" y1="356.9" x2="911.3" y2="353.4" stroke="#000" stroke-width="1.2"/>
<line x1="913.0" y1="361.2" x2="908.7" y2="369.0" stroke="#000" stroke-width="1.2"/>
<line x1="903.5" y1="365.6" x2="898.3" y2="373.8" stroke="#000" stroke-width="1.2"/>
<line x1="903.5" y1="365.6" x2="908.7" y2="369.0" stroke="#000" stroke-width="1.2"/>
<line x1="908.7" y1="369.0" x2="902.6" y2="377.7" stroke="#000" stroke-width="1.2"/>
<line x1="918.6" y1="364.3" x2="915.2" y2="373.4" stroke="#000" stroke-width="1.2"/>
<line x1="918.6" y1="364.3" x2="922.1" y2="365.6" stroke="#000" stroke-width="1.2"/>
<line x1="922.1" y1="365.6" x2="926.4" y2="369.0" stroke="#000" stroke-width="1.2"/>
<line x1="929.0" y1="360.8" x2="926.4" y2="369.0" stroke="#000" stroke-width="1.2"/>
<line x1="929.0" y1="360.8" x2="922.1" y2="365.6" stroke="#000" stroke-width="1.2"/>
<line x1="906.1" y1="361.2" x2="913.0" y2="361.2" stroke="#000" stroke-width="1.2"/>
<line x1="913.0" y1="361.2" x2="918.6" y2="364.3" stroke="#000" stroke-width="1.2"/>
<line x1="896.6" y1="362.1" x2="903.5" y2="365.6" stroke="#000" stroke-width="1.2"/>
<line x1="893.5" y1="370.3" x2="903.5" y2="365.6" stroke="#000" stroke-width="1.2"/>
<line x1="898.3" y1="373.8" x2="908.7" y2="369.0" stroke="#000" stroke-width="1.2"/>
<line x1="911.3" y1="353.4" x2="913.0" y2="361.2" stroke="#000" stroke-width="1.2"/>
<line x1="896.6" y1="362.1" x2="893.5" y2="370.3" stroke="#000" stroke-width="1.2"/>
<line x1="921.2" y1="349.1" x2="911.3" y2="353.4" stroke="#000" stroke-width="1.2"/>
<line x1="897.4" y1="353.0" x2="902.2" y2="356.9" stroke="#000" stroke-width="1.2"/>
<circle cx="912.6" cy="328.3" r="1.4" fill="#000" stroke="#000" stroke-width="0.5"/>
<circle cx="912.6" cy="337.0" r="1.4" fill="#000" stroke="#000" stroke-width="0.5"/>
<circle cx="904.8" cy="341.3" r="1.4" fill="#000" stroke="#000" stroke-width="0.5"/>
<circle cx="921.2" cy="340.0" r="1.4" fill="#000" stroke="#000" stroke-width="0.5"/>
<circle cx="909.1" cy="344.8" r="1.4" fill="#000" stroke="#000" stroke-width="0.5"/>
<circle cx="904.8" cy="349.5" r="1.4" fill="#000" stroke="#000" stroke-width="0.5"/>
<circle cx="921.2" cy="349.1" r="1.4" fill="#000" stroke="#000" stroke-width="0.5"/>
<circle cx="897.4" cy="353.0" r="1.4" fill="#000" stroke="#000" stroke-width="0.5"/>
<circle cx="911.3" cy="353.4" r="1.4" fill="#000" stroke="#000" stroke-width="0.5"/>
<circle cx="929.9" cy="353.0" r="1.4" fill="#000" stroke="#000" stroke-width="0.5"/>
<circle cx="902.2" cy="356.9" r="1.4" fill="#000" stroke="#000" stroke-width="0.5"/>
<circle cx="918.2" cy="356.9" r="1.4" fill="#000" stroke="#000" stroke-width="0.5"/>
<circle cx="896.6" cy="362.1" r="1.4" fill="#000" stroke="#000" stroke-width="0.5"/>
<circle cx="906.1" cy="361.2" r="1.4" fill="#000" stroke="#000" stroke-width="0.5"/>
<circle cx="913.0" cy="361.2" r="1.4" fill="#000" stroke="#000" stroke-width="0.5"/>
<circle cx="929.0" cy="360.8" r="1.4" fill="#000" stroke="#000" stroke-width="0.5"/>
<circle cx="889.2" cy="366.4" r="1.4" fill="#000" stroke="#000" stroke-width="0.5"/>
<circle cx="903.5" cy="365.6" r="1.4" fill="#000" stroke="#000" stroke-width="0.5"/>
<circle cx="918.6" cy="364.3" r="1.4" fill="#000" stroke="#000" stroke-width="0.5"/>
<circle cx="922.1" cy="365.6" r="1.4" fill="#000" stroke="#000" stroke-width="0.5"/>
<circle cx="937.7" cy="364.3" r="1.4" fill="#000" stroke="#000" stroke-width="0.5"/>
<circle cx="893.5" cy="370.3" r="1.4" fill="#000" stroke="#000" stroke-width="0.5"/>
<circle cx="908.7" cy="369.0" r="1.4" fill="#000" stroke="#000" stroke-width="0.5"/>
<circle cx="926.4" cy="369.0" r="1.4" fill="#000" stroke="#000" stroke-width="0.5"/>
<circle cx="898.3" cy="373.8" r="1.4" fill="#000" stroke="#000" stroke-width="0.5"/>
<circle cx="915.2" cy="373.4" r="1.4" fill="#000" stroke="#000" stroke-width="0.5"/>
<circle cx="902.6" cy="377.7" r="1.4" fill="#000" stroke="#000" stroke-width="0.5"/>
<rect x="954" y="338" width="37" height="36.5" fill="#f0f8fb"/>
<polygon points="953.8,337.7 991.0,337.7 991.0,374.5 953.8,374.5" fill="none" stroke="#98c8c8" stroke-width="1"/>
<polygon points="960.8,334.6 996.8,334.6 996.8,371.4 960.8,371.4" fill="none" stroke="#98c8c8" stroke-width="0.8"/>
<line x1="953.8" y1="337.7" x2="960.8" y2="334.6" stroke="#98c8c8" stroke-width="0.9"/>
<line x1="991.0" y1="337.7" x2="996.8" y2="334.6" stroke="#98c8c8" stroke-width="0.9"/>
<line x1="991.0" y1="374.5" x2="996.8" y2="371.4" stroke="#98c8c8" stroke-width="0.9"/>
<line x1="953.8" y1="374.5" x2="960.8" y2="371.4" stroke="#98c8c8" stroke-width="0.9"/>
<line x1="970.9" y1="343.9" x2="960.8" y2="334.6" stroke="#70b0c8" stroke-width="0.6"/>
<line x1="970.9" y1="343.9" x2="975.0" y2="336.0" stroke="#70b0c8" stroke-width="0.6"/>
<line x1="970.9" y1="343.9" x2="971.0" y2="356.0" stroke="#70b0c8" stroke-width="0.6"/>
<line x1="970.9" y1="343.9" x2="978.5" y2="353.0" stroke="#70b0c8" stroke-width="0.6"/>
<line x1="984.4" y1="343.9" x2="991.0" y2="337.7" stroke="#70b0c8" stroke-width="0.6"/>
<line x1="984.4" y1="343.9" x2="975.0" y2="336.0" stroke="#70b0c8" stroke-width="0.6"/>
<line x1="984.4" y1="343.9" x2="978.5" y2="353.0" stroke="#70b0c8" stroke-width="0.6"/>
<line x1="963.9" y1="348.2" x2="960.8" y2="334.6" stroke="#70b0c8" stroke-width="0.6"/>
<line x1="963.9" y1="348.2" x2="957.5" y2="354.0" stroke="#70b0c8" stroke-width="0.6"/>
<line x1="963.9" y1="348.2" x2="971.0" y2="356.0" stroke="#70b0c8" stroke-width="0.6"/>
<line x1="977.5" y1="348.2" x2="975.0" y2="336.0" stroke="#70b0c8" stroke-width="0.6"/>
<line x1="977.5" y1="348.2" x2="971.0" y2="356.0" stroke="#70b0c8" stroke-width="0.6"/>
<line x1="977.5" y1="348.2" x2="978.5" y2="353.0" stroke="#70b0c8" stroke-width="0.6"/>
<line x1="970.9" y1="362.1" x2="960.8" y2="371.4" stroke="#70b0c8" stroke-width="0.6"/>
<line x1="970.9" y1="362.1" x2="976.0" y2="373.0" stroke="#70b0c8" stroke-width="0.6"/>
<line x1="970.9" y1="362.1" x2="971.0" y2="356.0" stroke="#70b0c8" stroke-width="0.6"/>
<line x1="970.9" y1="362.1" x2="978.5" y2="353.0" stroke="#70b0c8" stroke-width="0.6"/>
<line x1="984.4" y1="362.1" x2="993.0" y2="355.0" stroke="#70b0c8" stroke-width="0.6"/>
<line x1="984.4" y1="362.1" x2="976.0" y2="373.0" stroke="#70b0c8" stroke-width="0.6"/>
<line x1="984.4" y1="362.1" x2="978.5" y2="353.0" stroke="#70b0c8" stroke-width="0.6"/>
<line x1="963.9" y1="366.0" x2="953.8" y2="374.5" stroke="#70b0c8" stroke-width="0.6"/>
<line x1="963.9" y1="366.0" x2="960.8" y2="371.4" stroke="#70b0c8" stroke-width="0.6"/>
<line x1="963.9" y1="366.0" x2="957.5" y2="354.0" stroke="#70b0c8" stroke-width="0.6"/>
<line x1="963.9" y1="366.0" x2="976.0" y2="373.0" stroke="#70b0c8" stroke-width="0.6"/>
<line x1="963.9" y1="366.0" x2="971.0" y2="356.0" stroke="#70b0c8" stroke-width="0.6"/>
<line x1="977.5" y1="366.0" x2="976.0" y2="373.0" stroke="#70b0c8" stroke-width="0.6"/>
<line x1="977.5" y1="366.0" x2="971.0" y2="356.0" stroke="#70b0c8" stroke-width="0.6"/>
<line x1="977.5" y1="366.0" x2="978.5" y2="353.0" stroke="#70b0c8" stroke-width="0.6"/>
<circle cx="953.8" cy="337.7" r="2.3" fill="url(#slgr)" stroke="#b0d0a0" stroke-width="0.5"/>
<circle cx="991.0" cy="337.7" r="2.3" fill="url(#slgr)" stroke="#b0d0a0" stroke-width="0.5"/>
<circle cx="991.0" cy="374.5" r="2.3" fill="url(#slgr)" stroke="#b0d0a0" stroke-width="0.5"/>
<circle cx="953.8" cy="374.5" r="2.3" fill="url(#slgr)" stroke="#b0d0a0" stroke-width="0.5"/>
<circle cx="960.8" cy="334.6" r="2.3" fill="url(#slgr)" stroke="#b0d0a0" stroke-width="0.5"/>
<circle cx="996.8" cy="334.6" r="2.3" fill="url(#slgr)" stroke="#b0d0a0" stroke-width="0.5"/>
<circle cx="996.8" cy="371.4" r="2.3" fill="url(#slgr)" stroke="#b0d0a0" stroke-width="0.5"/>
<circle cx="960.8" cy="371.4" r="2.3" fill="url(#slgr)" stroke="#b0d0a0" stroke-width="0.5"/>
<circle cx="957.5" cy="354.0" r="2.3" fill="url(#slgr)" stroke="#b0d0a0" stroke-width="0.5"/>
<circle cx="993.0" cy="355.0" r="2.3" fill="url(#slgr)" stroke="#b0d0a0" stroke-width="0.5"/>
<circle cx="975.0" cy="336.0" r="2.3" fill="url(#slgr)" stroke="#b0d0a0" stroke-width="0.5"/>
<circle cx="976.0" cy="373.0" r="2.3" fill="url(#slgr)" stroke="#b0d0a0" stroke-width="0.5"/>
<circle cx="971.0" cy="356.0" r="2.3" fill="url(#slgr)" stroke="#b0d0a0" stroke-width="0.5"/>
<circle cx="978.5" cy="353.0" r="2.3" fill="url(#slgr)" stroke="#b0d0a0" stroke-width="0.5"/>
<circle cx="970.9" cy="343.9" r="2.8" fill="url(#sblu)" stroke="#3a70a8" stroke-width="0.4"/>
<circle cx="984.4" cy="343.9" r="2.8" fill="url(#sblu)" stroke="#3a70a8" stroke-width="0.4"/>
<circle cx="963.9" cy="348.2" r="2.8" fill="url(#sblu)" stroke="#3a70a8" stroke-width="0.4"/>
<circle cx="977.5" cy="348.2" r="2.8" fill="url(#sblu)" stroke="#3a70a8" stroke-width="0.4"/>
<circle cx="970.9" cy="362.1" r="2.8" fill="url(#sblu)" stroke="#3a70a8" stroke-width="0.4"/>
<circle cx="984.4" cy="362.1" r="2.8" fill="url(#sblu)" stroke="#3a70a8" stroke-width="0.4"/>
<circle cx="963.9" cy="366.0" r="2.8" fill="url(#sblu)" stroke="#3a70a8" stroke-width="0.4"/>
<circle cx="977.5" cy="366.0" r="2.8" fill="url(#sblu)" stroke="#3a70a8" stroke-width="0.4"/>
<line x1="708.1" y1="401.2" x2="741.3" y2="401.2" stroke="#606060" stroke-width="0.8" stroke-dasharray="1.5,1.2"/>
<line x1="741.3" y1="401.2" x2="741.3" y2="434.0" stroke="#606060" stroke-width="0.8" stroke-dasharray="1.5,1.2"/>
<line x1="741.3" y1="434.0" x2="708.1" y2="434.0" stroke="#606060" stroke-width="0.8" stroke-dasharray="1.5,1.2"/>
<line x1="708.1" y1="434.0" x2="708.1" y2="401.2" stroke="#606060" stroke-width="0.8" stroke-dasharray="1.5,1.2"/>
<line x1="718.9" y1="397.1" x2="750.3" y2="397.1" stroke="#606060" stroke-width="0.8" stroke-dasharray="1.5,1.2"/>
<line x1="750.3" y1="397.1" x2="750.3" y2="429.2" stroke="#606060" stroke-width="0.8" stroke-dasharray="1.5,1.2"/>
<line x1="750.3" y1="429.2" x2="718.9" y2="429.2" stroke="#606060" stroke-width="0.8" stroke-dasharray="1.5,1.2"/>
<line x1="718.9" y1="429.2" x2="718.9" y2="397.1" stroke="#606060" stroke-width="0.8" stroke-dasharray="1.5,1.2"/>
<line x1="708.1" y1="401.2" x2="718.9" y2="397.1" stroke="#606060" stroke-width="0.8" stroke-dasharray="1.5,1.2"/>
<line x1="741.3" y1="401.2" x2="750.3" y2="397.1" stroke="#606060" stroke-width="0.8" stroke-dasharray="1.5,1.2"/>
<line x1="741.3" y1="434.0" x2="750.3" y2="429.2" stroke="#606060" stroke-width="0.8" stroke-dasharray="1.5,1.2"/>
<line x1="708.1" y1="434.0" x2="718.9" y2="429.2" stroke="#606060" stroke-width="0.8" stroke-dasharray="1.5,1.2"/>
<line x1="708.1" y1="401.2" x2="736.1" y2="408.7" stroke="#202020" stroke-width="0.9"/>
<line x1="750.3" y1="397.1" x2="708.1" y2="434.0" stroke="#202020" stroke-width="0.9"/>
<line x1="729.4" y1="399.0" x2="745.8" y2="415.4" stroke="#202020" stroke-width="0.9"/>
<line x1="729.4" y1="399.0" x2="713.7" y2="415.4" stroke="#202020" stroke-width="0.9"/>
<line x1="713.7" y1="415.4" x2="730.1" y2="431.8" stroke="#202020" stroke-width="0.9"/>
<line x1="745.8" y1="415.4" x2="730.1" y2="431.8" stroke="#202020" stroke-width="0.9"/>
<line x1="718.9" y1="397.1" x2="740.9" y2="406.4" stroke="#202020" stroke-width="0.9"/>
<line x1="740.6" y1="401.2" x2="718.9" y2="426.6" stroke="#202020" stroke-width="0.9"/>
<line x1="718.9" y1="408.3" x2="724.1" y2="424.0" stroke="#202020" stroke-width="0.9"/>
<line x1="736.1" y1="408.7" x2="741.3" y2="424.0" stroke="#202020" stroke-width="0.9"/>
<line x1="724.1" y1="424.0" x2="750.3" y2="429.2" stroke="#202020" stroke-width="0.9"/>
<line x1="740.9" y1="406.4" x2="750.3" y2="397.1" stroke="#202020" stroke-width="0.9"/>
<circle cx="708.1" cy="401.2" r="2.2" fill="url(#sgry)" stroke="#404040" stroke-width="0.6"/>
<circle cx="718.9" cy="397.1" r="2.2" fill="url(#sgry)" stroke="#404040" stroke-width="0.6"/>
<circle cx="750.3" cy="397.1" r="2.2" fill="url(#sgry)" stroke="#404040" stroke-width="0.6"/>
<circle cx="740.6" cy="401.2" r="2.2" fill="url(#sgry)" stroke="#404040" stroke-width="0.6"/>
<circle cx="708.1" cy="434.0" r="2.2" fill="url(#sgry)" stroke="#404040" stroke-width="0.6"/>
<circle cx="718.9" cy="429.2" r="2.2" fill="url(#sgry)" stroke="#404040" stroke-width="0.6"/>
<circle cx="750.3" cy="429.2" r="2.2" fill="url(#sgry)" stroke="#404040" stroke-width="0.6"/>
<circle cx="741.3" cy="434.0" r="2.2" fill="url(#sgry)" stroke="#404040" stroke-width="0.6"/>
<circle cx="729.4" cy="399.0" r="2.2" fill="url(#sgry)" stroke="#404040" stroke-width="0.6"/>
<circle cx="713.7" cy="415.4" r="2.2" fill="url(#sgry)" stroke="#404040" stroke-width="0.6"/>
<circle cx="745.8" cy="415.4" r="2.2" fill="url(#sgry)" stroke="#404040" stroke-width="0.6"/>
<circle cx="724.5" cy="417.6" r="2.2" fill="url(#sgry)" stroke="#404040" stroke-width="0.6"/>
<circle cx="734.6" cy="413.5" r="2.2" fill="url(#sgry)" stroke="#404040" stroke-width="0.6"/>
<circle cx="730.1" cy="431.8" r="2.2" fill="url(#sgry)" stroke="#404040" stroke-width="0.6"/>
<circle cx="723.4" cy="406.0" r="1.7" fill="#000" stroke="#000" stroke-width="0.4"/>
<circle cx="718.9" cy="408.3" r="1.7" fill="#000" stroke="#000" stroke-width="0.4"/>
<circle cx="736.1" cy="408.7" r="1.7" fill="#000" stroke="#000" stroke-width="0.4"/>
<circle cx="740.9" cy="406.4" r="1.7" fill="#000" stroke="#000" stroke-width="0.4"/>
<circle cx="724.1" cy="424.0" r="1.7" fill="#000" stroke="#000" stroke-width="0.4"/>
<circle cx="718.9" cy="426.6" r="1.7" fill="#000" stroke="#000" stroke-width="0.4"/>
<circle cx="741.3" cy="424.0" r="1.7" fill="#000" stroke="#000" stroke-width="0.4"/>
<circle cx="736.5" cy="426.2" r="1.7" fill="#000" stroke="#000" stroke-width="0.4"/>
<line x1="772.6" y1="405.6" x2="785.5" y2="398.4" stroke="#303030" stroke-width="0.95"/>
<line x1="785.5" y1="398.4" x2="810.6" y2="400.6" stroke="#303030" stroke-width="0.95"/>
<line x1="810.6" y1="400.6" x2="811.3" y2="425.0" stroke="#303030" stroke-width="0.95"/>
<line x1="811.3" y1="425.0" x2="798.4" y2="431.4" stroke="#303030" stroke-width="0.95"/>
<line x1="798.4" y1="431.4" x2="773.3" y2="430.7" stroke="#303030" stroke-width="0.95"/>
<line x1="773.3" y1="430.7" x2="772.6" y2="405.6" stroke="#303030" stroke-width="0.95"/>
<line x1="772.6" y1="405.6" x2="798.4" y2="431.4" stroke="#303030" stroke-width="0.95"/>
<line x1="810.6" y1="400.6" x2="773.3" y2="430.7" stroke="#303030" stroke-width="0.95"/>
<line x1="785.5" y1="398.4" x2="811.3" y2="425.0" stroke="#303030" stroke-width="0.95"/>
<line x1="772.6" y1="405.6" x2="811.3" y2="425.0" stroke="#303030" stroke-width="0.95"/>
<line x1="785.5" y1="398.4" x2="798.4" y2="431.4" stroke="#303030" stroke-width="0.95"/>
<line x1="785.5" y1="407.0" x2="785.5" y2="420.7" stroke="#303030" stroke-width="0.95"/>
<line x1="797.7" y1="409.9" x2="797.7" y2="425.7" stroke="#303030" stroke-width="0.95"/>
<line x1="778.3" y1="415.6" x2="805.5" y2="413.5" stroke="#303030" stroke-width="0.95"/>
<line x1="785.5" y1="398.4" x2="773.3" y2="430.7" stroke="#303030" stroke-width="0.95"/>
<line x1="772.6" y1="405.6" x2="797.7" y2="409.9" stroke="#303030" stroke-width="0.95"/>
<line x1="785.5" y1="420.7" x2="811.3" y2="425.0" stroke="#303030" stroke-width="0.95"/>
<line x1="797.7" y1="409.9" x2="791.2" y2="428.5" stroke="#303030" stroke-width="0.95"/>
<line x1="778.3" y1="415.6" x2="798.4" y2="431.4" stroke="#303030" stroke-width="0.95"/>
<line x1="785.5" y1="407.0" x2="810.6" y2="400.6" stroke="#303030" stroke-width="0.95"/>
<ellipse cx="791.9" cy="402.7" rx="17" ry="3" fill="none" stroke="#303030" stroke-width="0.8"/>
<ellipse cx="792.7" cy="427.8" rx="18" ry="3" fill="none" stroke="#303030" stroke-width="0.8"/>
<circle cx="772.6" cy="405.6" r="1.2" fill="#fff" stroke="#333" stroke-width="0.7"/>
<circle cx="785.5" cy="398.4" r="1.2" fill="#fff" stroke="#333" stroke-width="0.7"/>
<circle cx="810.6" cy="400.6" r="1.2" fill="#fff" stroke="#333" stroke-width="0.7"/>
<circle cx="811.3" cy="425.0" r="1.2" fill="#fff" stroke="#333" stroke-width="0.7"/>
<circle cx="798.4" cy="431.4" r="1.2" fill="#fff" stroke="#333" stroke-width="0.7"/>
<circle cx="773.3" cy="430.7" r="1.2" fill="#fff" stroke="#333" stroke-width="0.7"/>
<circle cx="797.7" cy="409.9" r="1.2" fill="#fff" stroke="#333" stroke-width="0.7"/>
<circle cx="785.5" cy="420.7" r="1.2" fill="#fff" stroke="#333" stroke-width="0.7"/>
<circle cx="778.3" cy="415.6" r="1.2" fill="#fff" stroke="#333" stroke-width="0.7"/>
<circle cx="791.2" cy="428.5" r="1.2" fill="#fff" stroke="#333" stroke-width="0.7"/>
<circle cx="805.5" cy="413.5" r="1.2" fill="#fff" stroke="#333" stroke-width="0.7"/>
<line x1="769.7" y1="407.8" x2="769.7" y2="407.8" stroke="#000" stroke-width="0"/>
<line x1="771.2" y1="433.5" x2="771.2" y2="433.5" stroke="#000" stroke-width="0"/>
<line x1="786.2" y1="397.0" x2="786.2" y2="397.0" stroke="#000" stroke-width="0"/>
<line x1="812.7" y1="397.7" x2="812.7" y2="397.7" stroke="#000" stroke-width="0"/>
<line x1="812.7" y1="423.5" x2="812.7" y2="423.5" stroke="#000" stroke-width="0"/>
<line x1="796.2" y1="433.9" x2="796.2" y2="433.9" stroke="#000" stroke-width="0"/>
<line x1="769.7" y1="408.1" x2="772.6" y2="405.6" stroke="#303030" stroke-width="1.1"/>
<line x1="771.2" y1="433.5" x2="773.3" y2="430.7" stroke="#303030" stroke-width="1.1"/>
<line x1="786.2" y1="397.0" x2="785.5" y2="398.4" stroke="#303030" stroke-width="1.1"/>
<line x1="812.7" y1="398.1" x2="810.6" y2="400.6" stroke="#303030" stroke-width="1.1"/>
<line x1="812.7" y1="423.5" x2="811.3" y2="425.0" stroke="#303030" stroke-width="1.1"/>
<line x1="796.2" y1="433.9" x2="798.4" y2="431.4" stroke="#303030" stroke-width="1.1"/>
<line x1="839.4" y1="395.9" x2="839.4" y2="434.1" stroke="#c8b0b0" stroke-width="0.6"/>
<rect x="834.3" y="401.5" width="10.4" height="27" fill="#48a8e0"/>
<ellipse cx="839.4" cy="402.8" rx="7.2" ry="2.6" fill="#48a8e0"/>
<ellipse cx="839.4" cy="414.7" rx="7.2" ry="2.6" fill="#48a8e0"/>
<ellipse cx="839.4" cy="426.6" rx="7.2" ry="2.6" fill="#48a8e0"/>
<circle cx="836.8" cy="402.8" r="1.1" fill="#a8d8f8" stroke="none" stroke-width="0"/>
<circle cx="842.2" cy="402.8" r="1.1" fill="#a8d8f8" stroke="none" stroke-width="0"/>
<rect x="828.6" y="401.6" width="1.6" height="2.4" fill="#909090"/>
<circle cx="836.8" cy="406.8" r="1.1" fill="#a8d8f8" stroke="none" stroke-width="0"/>
<circle cx="842.2" cy="406.8" r="1.1" fill="#a8d8f8" stroke="none" stroke-width="0"/>
<rect x="828.6" y="405.6" width="1.6" height="2.4" fill="#909090"/>
<circle cx="836.8" cy="410.7" r="1.1" fill="#a8d8f8" stroke="none" stroke-width="0"/>
<circle cx="842.2" cy="410.7" r="1.1" fill="#a8d8f8" stroke="none" stroke-width="0"/>
<rect x="828.6" y="409.5" width="1.6" height="2.4" fill="#909090"/>
<circle cx="836.8" cy="414.7" r="1.1" fill="#a8d8f8" stroke="none" stroke-width="0"/>
<circle cx="842.2" cy="414.7" r="1.1" fill="#a8d8f8" stroke="none" stroke-width="0"/>
<rect x="828.6" y="413.5" width="1.6" height="2.4" fill="#909090"/>
<circle cx="836.8" cy="418.7" r="1.1" fill="#a8d8f8" stroke="none" stroke-width="0"/>
<circle cx="842.2" cy="418.7" r="1.1" fill="#a8d8f8" stroke="none" stroke-width="0"/>
<rect x="828.6" y="417.5" width="1.6" height="2.4" fill="#909090"/>
<circle cx="836.8" cy="422.7" r="1.1" fill="#a8d8f8" stroke="none" stroke-width="0"/>
<circle cx="842.2" cy="422.7" r="1.1" fill="#a8d8f8" stroke="none" stroke-width="0"/>
<rect x="828.6" y="421.5" width="1.6" height="2.4" fill="#909090"/>
<circle cx="836.8" cy="426.6" r="1.1" fill="#a8d8f8" stroke="none" stroke-width="0"/>
<circle cx="842.2" cy="426.6" r="1.1" fill="#a8d8f8" stroke="none" stroke-width="0"/>
<rect x="828.6" y="425.4" width="1.6" height="2.4" fill="#909090"/>
<line x1="859.1" y1="410.9" x2="859.1" y2="424.7" stroke="#6a8090" stroke-width="0.6"/>
<line x1="862.2" y1="407.5" x2="872.9" y2="407.2" stroke="#6a8090" stroke-width="0.6"/>
<line x1="859.1" y1="421.0" x2="869.1" y2="421.0" stroke="#6a8090" stroke-width="0.6"/>
<line x1="872.9" y1="407.2" x2="872.3" y2="422.8" stroke="#6a8090" stroke-width="0.6"/>
<line x1="859.1" y1="410.9" x2="862.2" y2="407.5" stroke="#6a8090" stroke-width="0.6"/>
<line x1="862.2" y1="407.5" x2="872.3" y2="422.8" stroke="#6a8090" stroke-width="0.6"/>
<line x1="859.1" y1="421.0" x2="872.9" y2="407.2" stroke="#6a8090" stroke-width="0.6"/>
<line x1="859.1" y1="410.9" x2="869.1" y2="421.0" stroke="#6a8090" stroke-width="0.6"/>
<circle cx="862.2" cy="407.5" r="1.3" fill="#90a8b8" stroke="#607080" stroke-width="0.5"/>
<circle cx="865.4" cy="409.4" r="1.3" fill="#90a8b8" stroke="#607080" stroke-width="0.5"/>
<circle cx="859.1" cy="410.9" r="1.3" fill="#90a8b8" stroke="#607080" stroke-width="0.5"/>
<circle cx="869.8" cy="410.9" r="1.3" fill="#90a8b8" stroke="#607080" stroke-width="0.5"/>
<circle cx="867.3" cy="412.8" r="1.3" fill="#90a8b8" stroke="#607080" stroke-width="0.5"/>
<circle cx="860.4" cy="414.1" r="1.3" fill="#90a8b8" stroke="#607080" stroke-width="0.5"/>
<circle cx="870.4" cy="414.4" r="1.3" fill="#90a8b8" stroke="#607080" stroke-width="0.5"/>
<circle cx="864.1" cy="415.9" r="1.3" fill="#90a8b8" stroke="#607080" stroke-width="0.5"/>
<circle cx="862.2" cy="417.8" r="1.3" fill="#90a8b8" stroke="#607080" stroke-width="0.5"/>
<circle cx="866.0" cy="419.1" r="1.3" fill="#90a8b8" stroke="#607080" stroke-width="0.5"/>
<circle cx="869.1" cy="421.0" r="1.3" fill="#90a8b8" stroke="#607080" stroke-width="0.5"/>
<circle cx="859.1" cy="421.0" r="1.3" fill="#90a8b8" stroke="#607080" stroke-width="0.5"/>
<circle cx="872.3" cy="417.8" r="1.3" fill="#90a8b8" stroke="#607080" stroke-width="0.5"/>
<circle cx="872.3" cy="422.8" r="1.3" fill="#90a8b8" stroke="#607080" stroke-width="0.5"/>
<circle cx="859.4" cy="424.7" r="1.3" fill="#90a8b8" stroke="#607080" stroke-width="0.5"/>
<circle cx="872.9" cy="407.2" r="1.3" fill="#90a8b8" stroke="#607080" stroke-width="0.5"/>
<line x1="890.8" y1="403.7" x2="890.8" y2="438.4" stroke="#000" stroke-width="1.1"/>
<line x1="890.8" y1="403.7" x2="923.9" y2="403.7" stroke="#000" stroke-width="1.1"/>
<line x1="907.3" y1="403.7" x2="907.3" y2="438.4" stroke="#000" stroke-width="1.1"/>
<line x1="890.8" y1="421.0" x2="923.9" y2="421.0" stroke="#000" stroke-width="1.1"/>
<line x1="923.9" y1="403.7" x2="923.9" y2="438.4" stroke="#000" stroke-width="1.1"/>
<line x1="890.8" y1="438.4" x2="923.9" y2="438.4" stroke="#000" stroke-width="1.1"/>
<line x1="890.8" y1="403.7" x2="904.8" y2="394.2" stroke="#000" stroke-width="1.1"/>
<line x1="923.9" y1="403.7" x2="937.9" y2="394.2" stroke="#000" stroke-width="1.1"/>
<line x1="907.3" y1="403.7" x2="921.3" y2="394.2" stroke="#000" stroke-width="1.1"/>
<line x1="923.9" y1="421.0" x2="937.9" y2="411.5" stroke="#000" stroke-width="1.1"/>
<line x1="923.9" y1="403.7" x2="937.9" y2="394.2" stroke="#000" stroke-width="1.1"/>
<line x1="923.9" y1="438.4" x2="937.9" y2="428.9" stroke="#000" stroke-width="1.1"/>
<line x1="897.8" y1="398.9" x2="930.9" y2="398.9" stroke="#000" stroke-width="1.1"/>
<line x1="930.9" y1="398.9" x2="930.9" y2="433.6" stroke="#000" stroke-width="1.1"/>
<line x1="904.8" y1="394.2" x2="937.9" y2="394.2" stroke="#000" stroke-width="1.1"/>
<line x1="937.9" y1="394.2" x2="937.9" y2="428.9" stroke="#000" stroke-width="1.1"/>
<line x1="897.8" y1="398.9" x2="897.8" y2="433.6" stroke="#000" stroke-width="1.2" stroke-dasharray="2.5,2"/>
<line x1="897.8" y1="433.6" x2="930.9" y2="433.6" stroke="#000" stroke-width="1.2" stroke-dasharray="2.5,2"/>
<line x1="914.3" y1="398.9" x2="914.3" y2="433.6" stroke="#000" stroke-width="1.2" stroke-dasharray="2.5,2"/>
<line x1="897.8" y1="416.3" x2="930.9" y2="416.3" stroke="#000" stroke-width="1.2" stroke-dasharray="2.5,2"/>
<line x1="904.8" y1="394.2" x2="904.8" y2="428.9" stroke="#000" stroke-width="1.2" stroke-dasharray="2.5,2"/>
<line x1="904.8" y1="428.9" x2="937.9" y2="428.9" stroke="#000" stroke-width="1.2" stroke-dasharray="2.5,2"/>
<line x1="890.8" y1="438.4" x2="904.8" y2="428.9" stroke="#000" stroke-width="1.2" stroke-dasharray="2.5,2"/>
<line x1="907.3" y1="438.4" x2="921.3" y2="428.9" stroke="#000" stroke-width="1.2" stroke-dasharray="2.5,2"/>
<polygon points="951.6,403.3 984.7,403.3 984.7,437.2 951.6,437.2" fill="none" stroke="#000" stroke-width="1.3"/>
<polyline points="951.6,403.3 965.3,393.6 998.4,393.6 998.4,427.5 984.7,437.2" fill="none" stroke="#000" stroke-width="1.3"/>
<line x1="984.7" y1="403.3" x2="998.4" y2="393.6" stroke="#000" stroke-width="1.3"/>
<line x1="965.3" y1="393.6" x2="965.3" y2="427.5" stroke="#000" stroke-width="1.1" stroke-dasharray="3,2"/>
<line x1="965.3" y1="427.5" x2="998.4" y2="427.5" stroke="#000" stroke-width="1.1" stroke-dasharray="3,2"/>
<line x1="951.6" y1="437.2" x2="965.3" y2="427.5" stroke="#000" stroke-width="1.1" stroke-dasharray="3,2"/>
<line x1="965.3" y1="393.6" x2="998.4" y2="427.5" stroke="#000" stroke-width="1.1" stroke-dasharray="3,2"/>
<line x1="951.6" y1="437.2" x2="983.0" y2="408.0" stroke="#000" stroke-width="1.1" stroke-dasharray="3,2"/>
</svg><!--/GRID-->
</body>
</html>
